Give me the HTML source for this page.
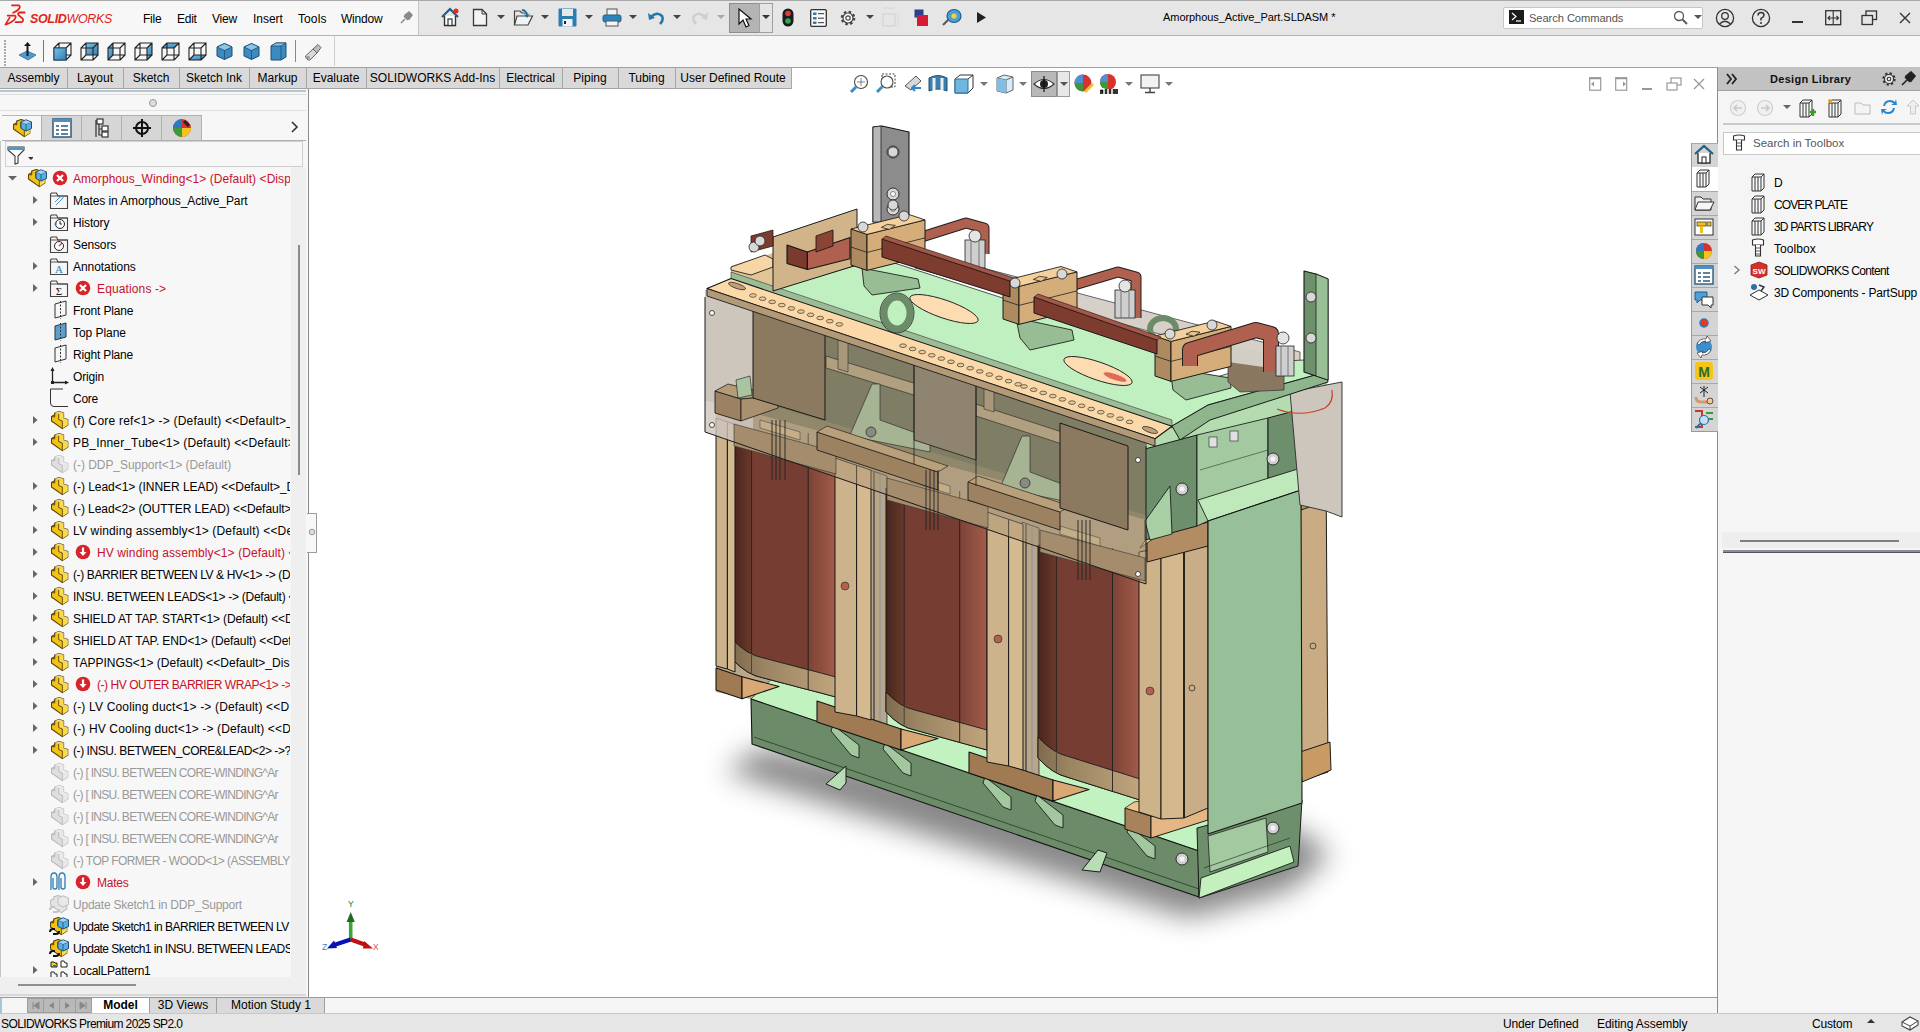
<!DOCTYPE html><html><head><meta charset="utf-8"><style>
html,body{margin:0;padding:0;} body{width:1920px;height:1032px;overflow:hidden;position:relative;background:#f5f5f5;font-family:"Liberation Sans", sans-serif;}
div,svg{box-sizing:border-box;}
</style></head><body>
<div style="position:absolute;left:309px;top:67px;width:1409px;height:930px;background:#ffffff;"></div>
<div style="position:absolute;left:0px;top:0px;width:1920px;height:36px;background:#e6e6e6;border-top:1px solid #a9a9a9;border-bottom:1px solid #b4b4b4;"></div>
<div style="position:absolute;left:0px;top:1px;width:418px;height:34px;background:#f7f7f7;"></div>
<div style="position:absolute;left:418px;top:1px;width:1px;height:34px;background:#c4c4c4;"></div>
<svg style="position:absolute;left:0px;top:0px;" width="30" height="30" viewBox="0 0 30 30"><path d="M12 5.4 H18.8 Q20.6 6 19.2 8.6 Q17 11.4 13 12.8" fill="none" stroke="#e2231a" stroke-width="1.7" stroke-linecap="round"/><path d="M7.6 15.6 H14.6 Q16.6 16.2 15 18.8 Q12 22.6 5.4 24.6 L9.6 17.6" fill="none" stroke="#e2231a" stroke-width="1.7" stroke-linecap="round" stroke-linejoin="round"/><path d="M24.6 12.5 H19.2 Q17.4 13.2 18.6 15.2 L22.6 18.6 Q24 21.2 21.4 22.2 H15.6" fill="none" stroke="#e2231a" stroke-width="1.8" stroke-linecap="round"/></svg>
<div style="position:absolute;left:30px;top:11px;font-size:12.5px;line-height:16px;color:#e2231a;white-space:nowrap;font-style:italic;letter-spacing:-0.35px;"><b>SOLID</b>WORKS</div>
<div style="position:absolute;left:143px;top:11.8px;font-size:12px;line-height:14.4px;color:#000;white-space:nowrap;letter-spacing:-0.227px;">File</div>
<div style="position:absolute;left:177px;top:11.8px;font-size:12px;line-height:14.4px;color:#000;white-space:nowrap;letter-spacing:-0.250px;">Edit</div>
<div style="position:absolute;left:212px;top:11.8px;font-size:12px;line-height:14.4px;color:#000;white-space:nowrap;letter-spacing:-0.187px;">View</div>
<div style="position:absolute;left:253px;top:11.8px;font-size:12px;line-height:14.4px;color:#000;white-space:nowrap;letter-spacing:-0.043px;">Insert</div>
<div style="position:absolute;left:298px;top:11.8px;font-size:12px;line-height:14.4px;color:#000;white-space:nowrap;letter-spacing:0.098px;">Tools</div>
<div style="position:absolute;left:341px;top:11.8px;font-size:12px;line-height:14.4px;color:#000;white-space:nowrap;letter-spacing:-0.222px;">Window</div>
<svg style="position:absolute;left:399px;top:10px;" width="14" height="14" viewBox="0 0 14 14"><path d="M2 13 L6 9 M5 6 L9 10 M6 5 L10 2 L13 5 L10 9 Z" fill="#8a8a8a" stroke="#8a8a8a" stroke-width="1.5"/></svg>
<svg style="position:absolute;left:440px;top:7px;" width="20" height="20" viewBox="0 0 20 20"><path d="M2 10 L10 2 L18 10" fill="none" stroke="#1d5f86" stroke-width="2.2"/><path d="M4.5 9 V18.5 H15.5 V9" fill="#fff" stroke="#333" stroke-width="1.4"/><rect x="8" y="12" width="4" height="6.5" fill="#fff" stroke="#333" stroke-width="1.2"/><circle cx="16" cy="4" r="2.5" fill="#e8291c"/></svg>
<svg style="position:absolute;left:472px;top:8px;" width="16" height="19" viewBox="0 0 16 19"><path d="M1.5 1.5 H10 L14.5 6 V17.5 H1.5 Z" fill="#f4f4f4" stroke="#3a3a3a" stroke-width="1.3"/><path d="M10 1.5 V6 H14.5" fill="none" stroke="#3a3a3a" stroke-width="1"/></svg>
<svg style="position:absolute;left:497px;top:15px;" width="8" height="5" viewBox="0 0 8 5"><path d="M0 0 L8 0 L4 4 Z" fill="#444"/></svg>
<svg style="position:absolute;left:513px;top:7px;" width="21" height="20" viewBox="0 0 21 20"><path d="M1.5 4 H7 L9 6 H14 V17.5 H1.5 Z" fill="#e6e6e6" stroke="#444" stroke-width="1.2"/><path d="M4 9 H19.5 L15 18 H1.5 Z" fill="#f2f2f2" stroke="#444" stroke-width="1.2"/><path d="M9 2 Q14 2 14.5 8 L17 6 L14 11 L11 7 L13 8 Q12.5 4 9 4 Z" fill="#1d6d9c"/></svg>
<svg style="position:absolute;left:541px;top:15px;" width="8" height="5" viewBox="0 0 8 5"><path d="M0 0 L8 0 L4 4 Z" fill="#444"/></svg>
<svg style="position:absolute;left:558px;top:8px;" width="19" height="19" viewBox="0 0 19 19"><rect x="0.5" y="0.5" width="18" height="18" rx="1" fill="#2a7eb0"/><rect x="4" y="1" width="11" height="7" fill="#e8e8e8"/><rect x="4.5" y="11" width="10" height="7.5" fill="#f2f2f2"/><rect x="6" y="13" width="2" height="3" fill="#222"/></svg>
<svg style="position:absolute;left:585px;top:15px;" width="8" height="5" viewBox="0 0 8 5"><path d="M0 0 L8 0 L4 4 Z" fill="#444"/></svg>
<svg style="position:absolute;left:602px;top:8px;" width="20" height="19" viewBox="0 0 20 19"><rect x="5" y="1" width="10" height="7" fill="#f2f2f2" stroke="#555" stroke-width="1"/><rect x="1" y="7" width="18" height="7" rx="2" fill="#2b85bd" stroke="#1e5f87" stroke-width="1"/><rect x="4" y="13" width="12" height="5" fill="#f5f5f5" stroke="#555" stroke-width="1"/></svg>
<svg style="position:absolute;left:629px;top:15px;" width="8" height="5" viewBox="0 0 8 5"><path d="M0 0 L8 0 L4 4 Z" fill="#444"/></svg>
<svg style="position:absolute;left:647px;top:9px;" width="18" height="17" viewBox="0 0 18 17"><path d="M4 8 Q10 2 15 7 Q17 11 13 15" fill="none" stroke="#2379ad" stroke-width="2.6"/><path d="M1 4 L2 11 L8 9 Z" fill="#2379ad"/></svg>
<svg style="position:absolute;left:673px;top:15px;" width="8" height="5" viewBox="0 0 8 5"><path d="M0 0 L8 0 L4 4 Z" fill="#444"/></svg>
<svg style="position:absolute;left:691px;top:9px;" width="18" height="17" viewBox="0 0 18 17"><path d="M14 8 Q8 2 3 7 Q1 11 5 15" fill="none" stroke="#cfcfcf" stroke-width="2.6"/><path d="M17 3 L16 11 L10 9 Z" fill="#cfcfcf"/></svg>
<svg style="position:absolute;left:717px;top:15px;" width="8" height="5" viewBox="0 0 8 5"><path d="M0 0 L8 0 L4 4 Z" fill="#aaa"/></svg>
<div style="position:absolute;left:729px;top:3px;width:31px;height:30px;background:#b4b4b4;border:1px solid #8e8e8e;"></div>
<div style="position:absolute;left:759px;top:3px;width:14px;height:30px;background:#e4e4e4;border:1px solid #a0a0a0;"></div>
<svg style="position:absolute;left:737px;top:8px;" width="16" height="20" viewBox="0 0 16 20"><path d="M2 1 L2 16 L6 12 L9 19 L12 17.5 L9 11 L14 11 Z" fill="#fff" stroke="#111" stroke-width="1.2"/></svg>
<svg style="position:absolute;left:761.5px;top:15px;" width="8" height="5" viewBox="0 0 8 5"><path d="M0 0 L8 0 L4 4 Z" fill="#333"/></svg>
<svg style="position:absolute;left:782px;top:8px;" width="12" height="19" viewBox="0 0 12 19"><rect x="0.5" y="0.5" width="11" height="18" rx="5.5" fill="#1c1c1c"/><circle cx="6" cy="5.5" r="2.8" fill="#e23b3b"/><circle cx="6" cy="13" r="2.8" fill="#2fa84f"/></svg>
<svg style="position:absolute;left:810px;top:9px;" width="17" height="18" viewBox="0 0 17 18"><rect x="0.7" y="0.7" width="15.6" height="16.6" rx="1" fill="#fafafa" stroke="#333" stroke-width="1.3"/><rect x="3" y="3.5" width="3.5" height="2.5" fill="#2b7cb3"/><rect x="3" y="8" width="3.5" height="2.5" fill="#2b7cb3"/><rect x="3" y="12.5" width="3.5" height="2.5" fill="#2b7cb3"/><path d="M8 4.7 H14 M8 9.2 H14 M8 13.7 H14" stroke="#333" stroke-width="1"/></svg>
<svg style="position:absolute;left:839px;top:9px;" width="18" height="18" viewBox="0 0 18 18"><circle cx="9" cy="9" r="6" fill="none" stroke="#444" stroke-width="2.6" stroke-dasharray="2.4 2.3"/><circle cx="9" cy="9" r="5" fill="#fff" stroke="#444" stroke-width="1.2"/><circle cx="9" cy="9" r="2.2" fill="none" stroke="#444" stroke-width="1.2"/></svg>
<svg style="position:absolute;left:865.5px;top:15px;" width="8" height="5" viewBox="0 0 8 5"><path d="M0 0 L8 0 L4 4 Z" fill="#444"/></svg>
<svg style="position:absolute;left:882px;top:4px;" width="20" height="24" viewBox="0 0 20 24"><rect x="1" y="10" width="12" height="12" fill="none" stroke="#cfcfcf" stroke-width="1"/><path d="M1 4 H13 M16 10 V22" stroke="#d6d6d6" stroke-width="1"/></svg>
<svg style="position:absolute;left:914px;top:9px;" width="15" height="18" viewBox="0 0 15 18"><rect x="0.5" y="0.5" width="9" height="8" fill="#2d3e8f"/><rect x="3" y="6" width="11" height="11" fill="#d51a35"/></svg>
<svg style="position:absolute;left:942px;top:8px;" width="20" height="19" viewBox="0 0 20 19"><ellipse cx="12" cy="8" rx="7" ry="6.5" fill="#4a9fd4" stroke="#1f5d85" stroke-width="1.2"/><circle cx="12" cy="8" r="2.6" fill="#f3d23c"/><path d="M6 12 L1 17" stroke="#555" stroke-width="2"/></svg>
<svg style="position:absolute;left:976px;top:11px;" width="11" height="13" viewBox="0 0 11 13"><path d="M1 1 L10 6.5 L1 12 Z" fill="#222"/></svg>
<div style="position:absolute;left:1163px;top:11.4px;font-size:11px;line-height:13.2px;color:#000;white-space:nowrap;letter-spacing:-0.06px;">Amorphous_Active_Part.SLDASM *</div>
<div style="position:absolute;left:1503px;top:7px;width:200px;height:22px;background:#fff;border:1px solid #c6c6c6;border-radius:2px;"></div>
<svg style="position:absolute;left:1509px;top:10px;" width="15" height="14" viewBox="0 0 15 14"><rect width="15" height="14" fill="#1c1c1c"/><path d="M3 3 L7 6.5 L3 10" fill="none" stroke="#fff" stroke-width="1.2"/><path d="M7 11 H12" stroke="#fff" stroke-width="1.2"/></svg>
<div style="position:absolute;left:1529px;top:12.3px;font-size:11.2px;line-height:13.4px;color:#555;white-space:nowrap;letter-spacing:-0.097px;">Search Commands</div>
<svg style="position:absolute;left:1673px;top:10px;" width="15" height="15" viewBox="0 0 15 15"><circle cx="6" cy="6" r="4.5" fill="none" stroke="#555" stroke-width="1.3"/><path d="M9.5 9.5 L14 14" stroke="#555" stroke-width="1.8"/></svg>
<svg style="position:absolute;left:1693.5px;top:15px;" width="8" height="5" viewBox="0 0 8 5"><path d="M0 0 L8 0 L4 4 Z" fill="#555"/></svg>
<svg style="position:absolute;left:1715px;top:8px;" width="20" height="20" viewBox="0 0 20 20"><circle cx="10" cy="10" r="8.6" fill="none" stroke="#333" stroke-width="1.3"/><circle cx="10" cy="8" r="3.3" fill="none" stroke="#333" stroke-width="1.3"/><path d="M4.5 16 Q10 10.5 15.5 16" fill="none" stroke="#333" stroke-width="1.3"/></svg>
<svg style="position:absolute;left:1751px;top:8px;" width="20" height="20" viewBox="0 0 20 20"><circle cx="10" cy="10" r="8.6" fill="none" stroke="#333" stroke-width="1.3"/><path d="M7 7.5 Q7 4.5 10 4.5 Q13 4.5 13 7.2 Q13 9 10 10.5 V12.5" fill="none" stroke="#333" stroke-width="1.5"/><circle cx="10" cy="15" r="1" fill="#333"/></svg>
<div style="position:absolute;left:1792px;top:21px;width:11px;height:2px;background:#333;"></div>
<svg style="position:absolute;left:1825px;top:10px;" width="17" height="16" viewBox="0 0 17 16"><rect x="0.7" y="0.7" width="15" height="14" fill="none" stroke="#333" stroke-width="1.3"/><path d="M8.2 1 V15 M3 8 H13.5 M5 6 L3 8 L5 10 M11.5 6 L13.5 8 L11.5 10" fill="none" stroke="#333" stroke-width="1.1"/></svg>
<svg style="position:absolute;left:1861px;top:10px;" width="17" height="16" viewBox="0 0 17 16"><rect x="5" y="1" width="10.5" height="8.5" fill="none" stroke="#333" stroke-width="1.3"/><rect x="1" y="5.5" width="10.5" height="9" fill="#e6e6e6" stroke="#333" stroke-width="1.3"/></svg>
<svg style="position:absolute;left:1899px;top:12px;" width="12" height="12" viewBox="0 0 12 12"><path d="M1 1 L11 11 M11 1 L1 11" stroke="#333" stroke-width="1.4"/></svg>
<div style="position:absolute;left:0px;top:36px;width:1920px;height:31px;background:#f7f7f7;"></div>
<div style="position:absolute;left:0px;top:67px;width:1920px;height:1px;background:#a0a0a0;"></div>
<div style="position:absolute;left:334px;top:36px;width:1px;height:30px;background:#cfcfcf;"></div>
<div style="position:absolute;left:4px;top:40px;width:2px;height:2px;background:#aaa;"></div>
<div style="position:absolute;left:4px;top:43px;width:2px;height:2px;background:#aaa;"></div>
<div style="position:absolute;left:4px;top:46px;width:2px;height:2px;background:#aaa;"></div>
<div style="position:absolute;left:4px;top:49px;width:2px;height:2px;background:#aaa;"></div>
<div style="position:absolute;left:4px;top:52px;width:2px;height:2px;background:#aaa;"></div>
<div style="position:absolute;left:4px;top:55px;width:2px;height:2px;background:#aaa;"></div>
<div style="position:absolute;left:4px;top:58px;width:2px;height:2px;background:#aaa;"></div>
<div style="position:absolute;left:4px;top:61px;width:2px;height:2px;background:#aaa;"></div>
<div style="position:absolute;left:4px;top:64px;width:2px;height:2px;background:#aaa;"></div>
<svg style="position:absolute;left:18px;top:41px;" width="19" height="20" viewBox="0 0 19 20"><path d="M1 14 L9 10 L18 14 L10 19 Z" fill="#4f9ccc" stroke="#2d6e99" stroke-width="0.8"/><path d="M9.5 15 V3" stroke="#1a1a1a" stroke-width="2"/><path d="M6 5 L9.5 1 L13 5 Z" fill="#1a1a1a"/></svg>
<div style="position:absolute;left:43px;top:40px;width:1px;height:22px;background:#777;"></div>
<div style="position:absolute;left:295px;top:40px;width:1px;height:22px;background:#888;"></div>
<svg style="position:absolute;left:53px;top:42px" width="19" height="19" viewBox="0 0 19 19"><defs><linearGradient id="cubeg" x1="0" y1="0" x2="1" y2="1"><stop offset="0" stop-color="#7cc2e8"/><stop offset="1" stop-color="#2f7db0"/></linearGradient></defs><path d="M1 6 H13 V18 H1 Z M6 1 H18 V13 H6 Z M1 6 L6 1 M13 6 L18 1 M13 18 L18 13 M1 18 L6 13" fill="none" stroke="#222" stroke-width="1.1"/><path d="M1 6 H13 V18 H1 Z" fill="url(#cubeg)" stroke="#1f4f70" stroke-width="1.1"/></svg>
<svg style="position:absolute;left:80px;top:42px" width="19" height="19" viewBox="0 0 19 19"><defs><linearGradient id="cubeg" x1="0" y1="0" x2="1" y2="1"><stop offset="0" stop-color="#7cc2e8"/><stop offset="1" stop-color="#2f7db0"/></linearGradient></defs><path d="M6 1 H18 V13 H6 Z" fill="url(#cubeg)"/><path d="M1 6 H13 V18 H1 Z M6 1 H18 V13 H6 Z M1 6 L6 1 M13 6 L18 1 M13 18 L18 13 M1 18 L6 13" fill="none" stroke="#222" stroke-width="1.1"/></svg>
<svg style="position:absolute;left:107px;top:42px" width="19" height="19" viewBox="0 0 19 19"><defs><linearGradient id="cubeg" x1="0" y1="0" x2="1" y2="1"><stop offset="0" stop-color="#7cc2e8"/><stop offset="1" stop-color="#2f7db0"/></linearGradient></defs><path d="M1 6 L6 1 V13 L1 18 Z" fill="url(#cubeg)"/><path d="M1 6 H13 V18 H1 Z M6 1 H18 V13 H6 Z M1 6 L6 1 M13 6 L18 1 M13 18 L18 13 M1 18 L6 13" fill="none" stroke="#222" stroke-width="1.1"/></svg>
<svg style="position:absolute;left:134px;top:42px" width="19" height="19" viewBox="0 0 19 19"><defs><linearGradient id="cubeg" x1="0" y1="0" x2="1" y2="1"><stop offset="0" stop-color="#7cc2e8"/><stop offset="1" stop-color="#2f7db0"/></linearGradient></defs><path d="M13 6 L18 1 V13 L13 18 Z" fill="url(#cubeg)"/><path d="M1 6 H13 V18 H1 Z M6 1 H18 V13 H6 Z M1 6 L6 1 M13 6 L18 1 M13 18 L18 13 M1 18 L6 13" fill="none" stroke="#222" stroke-width="1.1"/></svg>
<svg style="position:absolute;left:161px;top:42px" width="19" height="19" viewBox="0 0 19 19"><defs><linearGradient id="cubeg" x1="0" y1="0" x2="1" y2="1"><stop offset="0" stop-color="#7cc2e8"/><stop offset="1" stop-color="#2f7db0"/></linearGradient></defs><path d="M1 6 L6 1 H18 L13 6 Z" fill="url(#cubeg)"/><path d="M1 6 H13 V18 H1 Z M6 1 H18 V13 H6 Z M1 6 L6 1 M13 6 L18 1 M13 18 L18 13 M1 18 L6 13" fill="none" stroke="#222" stroke-width="1.1"/></svg>
<svg style="position:absolute;left:188px;top:42px" width="19" height="19" viewBox="0 0 19 19"><defs><linearGradient id="cubeg" x1="0" y1="0" x2="1" y2="1"><stop offset="0" stop-color="#7cc2e8"/><stop offset="1" stop-color="#2f7db0"/></linearGradient></defs><path d="M1 18 L6 13 H18 L13 18 Z" fill="url(#cubeg)"/><path d="M1 6 H13 V18 H1 Z M6 1 H18 V13 H6 Z M1 6 L6 1 M13 6 L18 1 M13 18 L18 13 M1 18 L6 13" fill="none" stroke="#222" stroke-width="1.1"/></svg>
<svg style="position:absolute;left:215px;top:42px" width="19" height="19" viewBox="0 0 19 19"><defs><linearGradient id="cubeg" x1="0" y1="0" x2="1" y2="1"><stop offset="0" stop-color="#7cc2e8"/><stop offset="1" stop-color="#2f7db0"/></linearGradient></defs><path d="M9.5 1.5 L17 5 V14 L9.5 17.5 L2 14 V5 Z" fill="#3b8bc0" stroke="#1f4f70" stroke-width="1"/><path d="M2 5 L9.5 8.5 L17 5 L9.5 1.5 Z" fill="#8cc4e6" stroke="#1f4f70" stroke-width="0.8"/><path d="M9.5 8.5 V17.5" stroke="#1f4f70" stroke-width="0.8"/></svg>
<svg style="position:absolute;left:242px;top:42px" width="19" height="19" viewBox="0 0 19 19"><defs><linearGradient id="cubeg" x1="0" y1="0" x2="1" y2="1"><stop offset="0" stop-color="#7cc2e8"/><stop offset="1" stop-color="#2f7db0"/></linearGradient></defs><path d="M9.5 1.5 L17 5 V14 L9.5 17.5 L2 14 V5 Z" fill="#3b8bc0" stroke="#1f4f70" stroke-width="1"/><path d="M2 5 L9.5 8.5 L17 5 L9.5 1.5 Z" fill="#8cc4e6" stroke="#1f4f70" stroke-width="0.8"/><path d="M9.5 8.5 V17.5" stroke="#1f4f70" stroke-width="0.8"/></svg>
<svg style="position:absolute;left:269px;top:42px" width="19" height="19" viewBox="0 0 19 19"><defs><linearGradient id="cubeg" x1="0" y1="0" x2="1" y2="1"><stop offset="0" stop-color="#7cc2e8"/><stop offset="1" stop-color="#2f7db0"/></linearGradient></defs><path d="M2 4 L7 1 H17 V15 L12 18 H2 Z" fill="#3b8bc0" stroke="#1f4f70" stroke-width="1"/><path d="M2 4 L7 1 H17 L12 4 Z" fill="#8cc4e6" stroke="#1f4f70" stroke-width="0.8"/><path d="M12 4 V18" stroke="#1f4f70" stroke-width="0.8"/></svg>
<svg style="position:absolute;left:304px;top:42px;" width="19" height="19" viewBox="0 0 19 19"><path d="M1.5 14 L9 7 L13 11 L6 18 Q2 18.5 1.5 14 Z" fill="#d8d8d8" stroke="#666" stroke-width="1"/><path d="M9 7 L14 2.5 L17 5.5 L13 11 Z" fill="#bdbdbd" stroke="#666" stroke-width="1"/><ellipse cx="4" cy="15.5" rx="2" ry="1.5" fill="#999"/></svg>
<div style="position:absolute;left:0px;top:68px;width:792px;height:21px;background:#d9d9d9;border-bottom:1px solid #a3a3a3;"></div>
<div style="position:absolute;left:67px;top:68px;width:1px;height:21px;background:#a8a8a8;"></div>
<div style="position:absolute;left:0px;top:69px;width:67px;text-align:center;font-size:12px;line-height:18px;color:#000;white-space:nowrap;">Assembly</div>
<div style="position:absolute;left:123px;top:68px;width:1px;height:21px;background:#a8a8a8;"></div>
<div style="position:absolute;left:67px;top:69px;width:56px;text-align:center;font-size:12px;line-height:18px;color:#000;white-space:nowrap;">Layout</div>
<div style="position:absolute;left:179px;top:68px;width:1px;height:21px;background:#a8a8a8;"></div>
<div style="position:absolute;left:123px;top:69px;width:56px;text-align:center;font-size:12px;line-height:18px;color:#000;white-space:nowrap;">Sketch</div>
<div style="position:absolute;left:249px;top:68px;width:1px;height:21px;background:#a8a8a8;"></div>
<div style="position:absolute;left:179px;top:69px;width:70px;text-align:center;font-size:12px;line-height:18px;color:#000;white-space:nowrap;">Sketch Ink</div>
<div style="position:absolute;left:306px;top:68px;width:1px;height:21px;background:#a8a8a8;"></div>
<div style="position:absolute;left:249px;top:69px;width:57px;text-align:center;font-size:12px;line-height:18px;color:#000;white-space:nowrap;">Markup</div>
<div style="position:absolute;left:366px;top:68px;width:1px;height:21px;background:#a8a8a8;"></div>
<div style="position:absolute;left:306px;top:69px;width:60px;text-align:center;font-size:12px;line-height:18px;color:#000;white-space:nowrap;">Evaluate</div>
<div style="position:absolute;left:499px;top:68px;width:1px;height:21px;background:#a8a8a8;"></div>
<div style="position:absolute;left:366px;top:69px;width:133px;text-align:center;font-size:12px;line-height:18px;color:#000;white-space:nowrap;">SOLIDWORKS Add-Ins</div>
<div style="position:absolute;left:562px;top:68px;width:1px;height:21px;background:#a8a8a8;"></div>
<div style="position:absolute;left:499px;top:69px;width:63px;text-align:center;font-size:12px;line-height:18px;color:#000;white-space:nowrap;">Electrical</div>
<div style="position:absolute;left:618px;top:68px;width:1px;height:21px;background:#a8a8a8;"></div>
<div style="position:absolute;left:562px;top:69px;width:56px;text-align:center;font-size:12px;line-height:18px;color:#000;white-space:nowrap;">Piping</div>
<div style="position:absolute;left:675px;top:68px;width:1px;height:21px;background:#a8a8a8;"></div>
<div style="position:absolute;left:618px;top:69px;width:57px;text-align:center;font-size:12px;line-height:18px;color:#000;white-space:nowrap;">Tubing</div>
<div style="position:absolute;left:791px;top:68px;width:1px;height:21px;background:#a8a8a8;"></div>
<div style="position:absolute;left:675px;top:69px;width:116px;text-align:center;font-size:12px;line-height:18px;color:#000;white-space:nowrap;">User Defined Route</div>
<div style="position:absolute;left:0px;top:997px;width:1718px;height:16px;background:#f5f5f5;border-top:1px solid #9a9a9a;"></div>
<div style="position:absolute;left:0px;top:998px;width:2px;height:15px;background:#a9c4d2;"></div>
<div style="position:absolute;left:27px;top:998px;width:65px;height:15px;background:#9c9c9c;"></div>
<div style="position:absolute;left:28px;top:999px;width:15px;height:13px;background:#b9b9b9;"></div>
<div style="position:absolute;left:44px;top:999px;width:15px;height:13px;background:#b9b9b9;"></div>
<div style="position:absolute;left:60px;top:999px;width:15px;height:13px;background:#b9b9b9;"></div>
<div style="position:absolute;left:76px;top:999px;width:15px;height:13px;background:#b9b9b9;"></div>
<svg style="position:absolute;left:27px;top:998px;" width="65" height="15" viewBox="0 0 65 15"><path d="M6 4 V11 M12 4 L7 7.5 L12 11 Z" stroke="#888" fill="#888"/><path d="M27 4 L22 7.5 L27 11 Z" fill="#888"/><path d="M38 4 L43 7.5 L38 11 Z" fill="#888"/><path d="M59 4 V11 M53 4 L58 7.5 L53 11 Z" stroke="#888" fill="#888"/></svg>
<div style="position:absolute;left:92px;top:998px;width:57px;height:15px;background:#fff;"></div>
<div style="position:absolute;left:92px;top:997px;width:57px;text-align:center;font-size:12px;line-height:16px;font-weight:bold;color:#000;">Model</div>
<div style="position:absolute;left:149px;top:998px;width:68px;height:15px;background:#d9d9d9;border-left:1px solid #a0a0a0;border-right:1px solid #a0a0a0;"></div>
<div style="position:absolute;left:149px;top:997px;width:68px;text-align:center;font-size:12px;line-height:16px;color:#000;">3D Views</div>
<div style="position:absolute;left:217px;top:998px;width:108px;height:15px;background:#d9d9d9;border-right:1px solid #a0a0a0;"></div>
<div style="position:absolute;left:217px;top:997px;width:108px;text-align:center;font-size:12px;line-height:16px;color:#000;">Motion Study 1</div>
<div style="position:absolute;left:0px;top:1013px;width:1920px;height:19px;background:#e6e6e6;border-top:1px solid #c8c8c8;"></div>
<div style="position:absolute;left:1px;top:1016.8px;font-size:12px;line-height:14.4px;color:#000;white-space:nowrap;letter-spacing:-0.6px;">SOLIDWORKS Premium 2025 SP2.0</div>
<div style="position:absolute;left:1503px;top:1016.8px;font-size:12px;line-height:14.4px;color:#000;white-space:nowrap;letter-spacing:-0.147px;">Under Defined</div>
<div style="position:absolute;left:1597px;top:1016.8px;font-size:12px;line-height:14.4px;color:#000;white-space:nowrap;letter-spacing:-0.062px;">Editing Assembly</div>
<div style="position:absolute;left:1812px;top:1016.8px;font-size:12px;line-height:14.4px;color:#000;white-space:nowrap;letter-spacing:-0.160px;">Custom</div>
<svg style="position:absolute;left:1867px;top:1018px;" width="8" height="6" viewBox="0 0 8 6"><path d="M0 5 L4 1 L8 5 Z" fill="#333"/></svg>
<svg style="position:absolute;left:1900px;top:1015px;" width="20" height="17" viewBox="0 0 20 17"><path d="M2 7 L10 2 L18 6 L18 10 L10 15 L2 11 Z" fill="#fff" stroke="#444" stroke-width="1.1"/><path d="M2 7 L10 11 L18 6 M10 11 V15" fill="none" stroke="#444" stroke-width="1"/></svg>
<div style="position:absolute;left:0px;top:89px;width:309px;height:908px;background:#f7f7f7;"></div>
<div style="position:absolute;left:308px;top:89px;width:1px;height:908px;background:#8a8a8a;"></div>
<div style="position:absolute;left:0px;top:90px;width:306px;height:2px;background:#b4c6d1;"></div>
<div style="position:absolute;left:0px;top:94px;width:306px;height:1px;background:#dcdcdc;"></div>
<svg style="position:absolute;left:148px;top:98px;" width="10" height="10" viewBox="0 0 10 10"><circle cx="5" cy="5" r="3.5" fill="#ddd" stroke="#999" stroke-width="1"/></svg>
<div style="position:absolute;left:0px;top:110px;width:306px;height:1px;background:#e0e0e0;"></div>
<div style="position:absolute;left:41px;top:115px;width:41px;height:26px;background:#d6d6d6;border:1px solid #b0b0b0;border-bottom:none;"></div>
<div style="position:absolute;left:81px;top:115px;width:41px;height:26px;background:#d6d6d6;border:1px solid #b0b0b0;border-bottom:none;"></div>
<div style="position:absolute;left:121px;top:115px;width:41px;height:26px;background:#d6d6d6;border:1px solid #b0b0b0;border-bottom:none;"></div>
<div style="position:absolute;left:161px;top:115px;width:41px;height:26px;background:#d6d6d6;border:1px solid #b0b0b0;border-bottom:none;"></div>
<div style="position:absolute;left:2px;top:140px;width:304px;height:1px;background:#b0b0b0;"></div>
<div style="position:absolute;left:2px;top:115px;width:39px;height:1px;background:#b8b8b8;"></div>
<svg style="position:absolute;left:13px;top:119px;" width="20" height="19" viewBox="0 0 20 19"><path d="M0.5 5.5 L3.7 3.8 L3.7 2 L8.2 0.5 L12.6 2 L12.6 7.2 L16.8 8.6 L16.8 14 L11.3 17.6 L0.5 10 Z" fill="#f2c313" stroke="#5a4208" stroke-width="1.1" stroke-linejoin="round"/><path d="M11.3 10 L16.8 8.4 L16.8 14 L11.3 17.5 Z" fill="#f8dc4c"/><path d="M7.7 2.8 V8.6 L11.3 10 V17.5 M0.5 5.5 L3.7 6 V3.8" fill="none" stroke="#5a4208" stroke-width="0.9"/><path d="M8 3 L13 0.8 L18.5 3 V9.5 L13 12 L8 9.5 Z" fill="#5aaee0" stroke="#1f4f78" stroke-width="1"/><path d="M8 3 L13 5.2 L18.5 3 M13 5.2 V12" fill="none" stroke="#1f4f78" stroke-width="0.8"/><path d="M8.5 3.2 L13 1.3 L18 3.2 L13 5 Z" fill="#9fd4f2"/></svg>
<svg style="position:absolute;left:52px;top:118px;" width="20" height="20" viewBox="0 0 20 20"><rect x="1" y="1" width="18" height="18" fill="#fff" stroke="#2c5b7e" stroke-width="1.5"/><rect x="1" y="1" width="18" height="3" fill="#4f8fc0"/><path d="M4 8 H7 M9 8 H16 M4 12 H7 M9 12 H16 M4 16 H7 M9 16 H16" stroke="#2c5b7e" stroke-width="1.4"/></svg>
<svg style="position:absolute;left:93px;top:118px;" width="18" height="20" viewBox="0 0 18 20"><rect x="4" y="1" width="6" height="5" fill="#fff" stroke="#333" stroke-width="1.2"/><rect x="9" y="8" width="6" height="5" fill="#fff" stroke="#333" stroke-width="1.2"/><rect x="9" y="14" width="6" height="5" fill="#fff" stroke="#333" stroke-width="1.2"/><path d="M3 2 V19 M6 6 V17 H9 M6 11 H9" fill="none" stroke="#333" stroke-width="1.2"/></svg>
<svg style="position:absolute;left:132px;top:118px;" width="20" height="20" viewBox="0 0 20 20"><circle cx="10" cy="10" r="6" fill="none" stroke="#111" stroke-width="2"/><path d="M10 1 V19 M1 10 H19" stroke="#111" stroke-width="2"/></svg>
<svg style="position:absolute;left:172px;top:118px;" width="20" height="20" viewBox="0 0 20 20"><circle cx="10" cy="10" r="9" fill="#d9312b"/><path d="M10 10 L1 10 A9 9 0 0 0 10 19 Z" fill="#3a9a3a"/><path d="M10 10 L10 19 A9 9 0 0 0 19 10 Z" fill="#f3c41c"/><path d="M10 10 L1 10 A9 9 0 0 1 10 1 Z" fill="#2f78c8"/><path d="M12 3 L17 8" stroke="#222" stroke-width="3"/></svg>
<svg style="position:absolute;left:290px;top:121px;" width="10" height="12" viewBox="0 0 10 12"><path d="M2 1 L7 6 L2 11" fill="none" stroke="#333" stroke-width="1.6"/></svg>
<div style="position:absolute;left:5px;top:141px;width:298px;height:26px;background:#f7f7f7;border:1px solid #d0d0d0;"></div>
<svg style="position:absolute;left:7px;top:146px;" width="26" height="19" viewBox="0 0 26 19"><path d="M1 1 H17 V4 L11 10 V17 L8 18 V10 L1 4 Z" fill="#fff" stroke="#3a3a3a" stroke-width="1.1"/><path d="M1 1 H17 V4 H1 Z" fill="#4a9bd0"/><path d="M21 11 L27 11 L24 14 Z" fill="#333"/></svg>
<div style="position:absolute;left:0px;top:141px;width:1px;height:836px;background:#c4c4c4;"></div>
<div style="position:absolute;left:291px;top:167px;width:15px;height:810px;background:#efefef;"></div>
<div style="position:absolute;left:298px;top:245px;width:2px;height:230px;background:#8c8c8c;"></div>
<div style="position:absolute;left:307px;top:513px;width:10px;height:40px;background:#f7f7f7;border:1px solid #9c9c9c;border-left:none;"></div>
<svg style="position:absolute;left:308px;top:528px;" width="8" height="8" viewBox="0 0 8 8"><circle cx="4" cy="4" r="2.8" fill="#ddd" stroke="#999" stroke-width="1"/></svg>
<div style="position:absolute;left:0px;top:977px;width:306px;height:20px;background:#efefef;"></div>
<div style="position:absolute;left:18px;top:984px;width:118px;height:2px;background:#8f8f8f;"></div>
<div style="position:absolute;left:0px;top:994px;width:306px;height:2px;background:#d8d8d8;"></div>
<div style="position:absolute;left:0;top:167px;width:290px;height:810px;overflow:hidden;">
<svg style="position:absolute;left:7px;top:8px;" width="11" height="7" viewBox="0 0 11 7"><path d="M1 1 H10 L5.5 5.5 Z" fill="#666"/></svg>
<svg style="position:absolute;left:28px;top:2px;" width="20" height="19" viewBox="0 0 20 19"><path d="M0.5 5.5 L3.7 3.8 L3.7 2 L8.2 0.5 L12.6 2 L12.6 7.2 L16.8 8.6 L16.8 14 L11.3 17.6 L0.5 10 Z" fill="#f2c313" stroke="#5a4208" stroke-width="1.1" stroke-linejoin="round"/><path d="M11.3 10 L16.8 8.4 L16.8 14 L11.3 17.5 Z" fill="#f8dc4c"/><path d="M7.7 2.8 V8.6 L11.3 10 V17.5 M0.5 5.5 L3.7 6 V3.8" fill="none" stroke="#5a4208" stroke-width="0.9"/><path d="M8 3 L13 0.8 L18.5 3 V9.5 L13 12 L8 9.5 Z" fill="#5aaee0" stroke="#1f4f78" stroke-width="1"/><path d="M8 3 L13 5.2 L18.5 3 M13 5.2 V12" fill="none" stroke="#1f4f78" stroke-width="0.8"/><path d="M8.5 3.2 L13 1.3 L18 3.2 L13 5 Z" fill="#9fd4f2"/></svg>
<svg style="position:absolute;left:52px;top:3px;" width="16" height="16" viewBox="0 0 16 16"><circle cx="8" cy="8" r="7.3" fill="#d8232a"/><path d="M5 5 L11 11 M11 5 L5 11" stroke="#fff" stroke-width="2.2"/></svg>
<div style="position:absolute;left:73px;top:4px;font-size:12px;line-height:16px;color:#c8102a;white-space:nowrap;letter-spacing:0.058px;">Amorphous_Winding&lt;1&gt; (Default) &lt;Disp</div>
<svg style="position:absolute;left:32px;top:28px;" width="7" height="10" viewBox="0 0 7 10"><path d="M1 1 L5.5 5 L1 9 Z" fill="#666"/></svg>
<svg style="position:absolute;left:49px;top:23px;" width="20" height="20" viewBox="0 0 20 20"><path d="M1.5 4 V18.5 H18.5 V6 H9 L7.5 3 H2.5 Z" fill="#f6f6f6" stroke="#444" stroke-width="1.1"/><path d="M1.5 6 H18.5" stroke="#444" stroke-width="0.9"/><path d="M7 15 L13 9 Q15 7 13.5 6.5 Q12 6 10 8 L6 12" fill="none" stroke="#4a8fc0" stroke-width="1"/></svg>
<div style="position:absolute;left:73px;top:26px;font-size:12px;line-height:16px;color:#000;white-space:nowrap;letter-spacing:-0.097px;">Mates in Amorphous_Active_Part</div>
<svg style="position:absolute;left:32px;top:50px;" width="7" height="10" viewBox="0 0 7 10"><path d="M1 1 L5.5 5 L1 9 Z" fill="#666"/></svg>
<svg style="position:absolute;left:49px;top:45px;" width="20" height="20" viewBox="0 0 20 20"><path d="M1.5 4 V18.5 H18.5 V6 H9 L7.5 3 H2.5 Z" fill="#f6f6f6" stroke="#444" stroke-width="1.1"/><path d="M1.5 6 H18.5" stroke="#444" stroke-width="0.9"/><circle cx="11" cy="12" r="4.5" fill="#fff" stroke="#222" stroke-width="1"/><path d="M11 9 V12 H13" stroke="#222" stroke-width="1" fill="none"/><path d="M5 12 L8 10 L7 14 Z" fill="#2f7db5"/></svg>
<div style="position:absolute;left:73px;top:48px;font-size:12px;line-height:16px;color:#000;white-space:nowrap;letter-spacing:-0.143px;">History</div>
<svg style="position:absolute;left:49px;top:67px;" width="20" height="20" viewBox="0 0 20 20"><path d="M1.5 4 V18.5 H18.5 V6 H9 L7.5 3 H2.5 Z" fill="#f6f6f6" stroke="#444" stroke-width="1.1"/><path d="M1.5 6 H18.5" stroke="#444" stroke-width="0.9"/><circle cx="10" cy="12" r="4.5" fill="#fff" stroke="#222" stroke-width="1"/><path d="M10 12 L13 9" stroke="#d83a2a" stroke-width="1.3"/></svg>
<div style="position:absolute;left:73px;top:70px;font-size:12px;line-height:16px;color:#000;white-space:nowrap;letter-spacing:-0.121px;">Sensors</div>
<svg style="position:absolute;left:32px;top:94px;" width="7" height="10" viewBox="0 0 7 10"><path d="M1 1 L5.5 5 L1 9 Z" fill="#666"/></svg>
<svg style="position:absolute;left:49px;top:89px;" width="20" height="20" viewBox="0 0 20 20"><path d="M1.5 4 V18.5 H18.5 V6 H9 L7.5 3 H2.5 Z" fill="#f6f6f6" stroke="#444" stroke-width="1.1"/><path d="M1.5 6 H18.5" stroke="#444" stroke-width="0.9"/><text x="10" y="17" font-size="11" font-family="Liberation Serif" text-anchor="middle" fill="#2f7db5">A</text></svg>
<div style="position:absolute;left:73px;top:92px;font-size:12px;line-height:16px;color:#000;white-space:nowrap;letter-spacing:-0.062px;">Annotations</div>
<svg style="position:absolute;left:32px;top:116px;" width="7" height="10" viewBox="0 0 7 10"><path d="M1 1 L5.5 5 L1 9 Z" fill="#666"/></svg>
<svg style="position:absolute;left:49px;top:111px;" width="20" height="20" viewBox="0 0 20 20"><path d="M1.5 4 V18.5 H18.5 V6 H9 L7.5 3 H2.5 Z" fill="#f6f6f6" stroke="#444" stroke-width="1.1"/><path d="M1.5 6 H18.5" stroke="#444" stroke-width="0.9"/><text x="10" y="17" font-size="11" font-family="Liberation Serif" text-anchor="middle" fill="#222">&#931;</text></svg>
<svg style="position:absolute;left:75px;top:113px;" width="16" height="16" viewBox="0 0 16 16"><circle cx="8" cy="8" r="7.3" fill="#d8232a"/><path d="M5 5 L11 11 M11 5 L5 11" stroke="#fff" stroke-width="2.2"/></svg>
<div style="position:absolute;left:97px;top:114px;font-size:12px;line-height:16px;color:#c8102a;white-space:nowrap;letter-spacing:0.126px;">Equations -&gt;</div>
<svg style="position:absolute;left:52px;top:133px;" width="18" height="20" viewBox="0 0 18 20"><path d="M3 4 L14 1 V15 L3 18 Z" fill="none" stroke="#333" stroke-width="1"/><path d="M8.5 1 V19" stroke="#333" stroke-width="1" stroke-dasharray="2 1.5"/></svg>
<div style="position:absolute;left:73px;top:136px;font-size:12px;line-height:16px;color:#000;white-space:nowrap;letter-spacing:-0.158px;">Front Plane</div>
<svg style="position:absolute;left:52px;top:155px;" width="18" height="20" viewBox="0 0 18 20"><path d="M3 4 L14 1 V15 L3 18 Z" fill="#5b9fd0" stroke="#333" stroke-width="1"/><path d="M8.5 1 V19" stroke="#333" stroke-width="1" stroke-dasharray="2 1.5"/></svg>
<div style="position:absolute;left:73px;top:158px;font-size:12px;line-height:16px;color:#000;white-space:nowrap;letter-spacing:-0.050px;">Top Plane</div>
<svg style="position:absolute;left:52px;top:177px;" width="18" height="20" viewBox="0 0 18 20"><path d="M3 4 L14 1 V15 L3 18 Z" fill="none" stroke="#333" stroke-width="1"/><path d="M8.5 1 V19" stroke="#333" stroke-width="1" stroke-dasharray="2 1.5"/></svg>
<div style="position:absolute;left:73px;top:180px;font-size:12px;line-height:16px;color:#000;white-space:nowrap;letter-spacing:-0.175px;">Right Plane</div>
<svg style="position:absolute;left:50px;top:199px;" width="20" height="20" viewBox="0 0 20 20"><path d="M2.5 3 V16.5 H17" fill="none" stroke="#222" stroke-width="1.3"/><path d="M0.5 5 L2.5 1 L4.5 5 Z M15 14.5 L19 16.5 L15 18.5 Z" fill="#222"/><rect x="1" y="15" width="3" height="3" fill="#222"/></svg>
<div style="position:absolute;left:73px;top:202px;font-size:12px;line-height:16px;color:#000;white-space:nowrap;letter-spacing:-0.185px;">Origin</div>
<svg style="position:absolute;left:50px;top:221px;" width="20" height="20" viewBox="0 0 20 20"><path d="M0.5 1 H13 M0.5 1 V15 Q0.5 18.5 4 18.5 H18" fill="none" stroke="#333" stroke-width="1"/></svg>
<div style="position:absolute;left:73px;top:224px;font-size:12px;line-height:16px;color:#000;white-space:nowrap;letter-spacing:-0.266px;">Core</div>
<svg style="position:absolute;left:32px;top:248px;" width="7" height="10" viewBox="0 0 7 10"><path d="M1 1 L5.5 5 L1 9 Z" fill="#666"/></svg>
<svg style="position:absolute;left:51px;top:244px;" width="18" height="19" viewBox="0 0 18 19"><path d="M0.5 5.5 L3.7 3.8 L3.7 2 L8.2 0.5 L12.6 2 L12.6 7.2 L16.8 8.6 L16.8 14 L11.3 17.6 L0.5 10 Z" fill="#f2c313" stroke="#5a4208" stroke-width="1.1" stroke-linejoin="round"/><path d="M7.7 2.8 L12.6 1.9 L12.6 7.2 L7.7 8.6 Z" fill="#f8dc4c"/><path d="M11.3 10 L16.8 8.4 L16.8 14 L11.3 17.5 Z" fill="#f8dc4c"/><path d="M3.7 1.9 L8.2 0.6 L12.5 1.9 L7.7 2.9 Z" fill="#f2d68a"/><path d="M7.7 8.6 L12.6 7.2 L16.7 8.5 L11.3 10 Z" fill="#f2d68a"/><path d="M7.7 2.8 V8.6 L11.3 10 V17.5 M0.5 5.5 L3.7 6 V3.8" fill="none" stroke="#5a4208" stroke-width="0.9"/></svg>
<div style="position:absolute;left:73px;top:246px;font-size:12px;line-height:16px;color:#000;white-space:nowrap;letter-spacing:0.218px;">(f) Core ref&lt;1&gt; -&gt; (Default) &lt;&lt;Default&gt;_D</div>
<svg style="position:absolute;left:32px;top:270px;" width="7" height="10" viewBox="0 0 7 10"><path d="M1 1 L5.5 5 L1 9 Z" fill="#666"/></svg>
<svg style="position:absolute;left:51px;top:266px;" width="18" height="19" viewBox="0 0 18 19"><path d="M0.5 5.5 L3.7 3.8 L3.7 2 L8.2 0.5 L12.6 2 L12.6 7.2 L16.8 8.6 L16.8 14 L11.3 17.6 L0.5 10 Z" fill="#f2c313" stroke="#5a4208" stroke-width="1.1" stroke-linejoin="round"/><path d="M7.7 2.8 L12.6 1.9 L12.6 7.2 L7.7 8.6 Z" fill="#f8dc4c"/><path d="M11.3 10 L16.8 8.4 L16.8 14 L11.3 17.5 Z" fill="#f8dc4c"/><path d="M3.7 1.9 L8.2 0.6 L12.5 1.9 L7.7 2.9 Z" fill="#f2d68a"/><path d="M7.7 8.6 L12.6 7.2 L16.7 8.5 L11.3 10 Z" fill="#f2d68a"/><path d="M7.7 2.8 V8.6 L11.3 10 V17.5 M0.5 5.5 L3.7 6 V3.8" fill="none" stroke="#5a4208" stroke-width="0.9"/></svg>
<div style="position:absolute;left:73px;top:268px;font-size:12px;line-height:16px;color:#000;white-space:nowrap;letter-spacing:0.156px;">PB_Inner_Tube&lt;1&gt; (Default) &lt;&lt;Default&gt;_</div>
<svg style="position:absolute;left:51px;top:288px;" width="18" height="19" viewBox="0 0 18 19"><path d="M0.5 5.5 L3.7 3.8 L3.7 2 L8.2 0.5 L12.6 2 L12.6 7.2 L16.8 8.6 L16.8 14 L11.3 17.6 L0.5 10 Z" fill="#dedede" stroke="#b8b8b8" stroke-width="1.1" stroke-linejoin="round"/><path d="M7.7 2.8 L12.6 1.9 L12.6 7.2 L7.7 8.6 Z" fill="#e8e8e8"/><path d="M11.3 10 L16.8 8.4 L16.8 14 L11.3 17.5 Z" fill="#e8e8e8"/><path d="M3.7 1.9 L8.2 0.6 L12.5 1.9 L7.7 2.9 Z" fill="#eeeeee"/><path d="M7.7 8.6 L12.6 7.2 L16.7 8.5 L11.3 10 Z" fill="#eeeeee"/><path d="M7.7 2.8 V8.6 L11.3 10 V17.5 M0.5 5.5 L3.7 6 V3.8" fill="none" stroke="#b8b8b8" stroke-width="0.9"/></svg>
<div style="position:absolute;left:73px;top:290px;font-size:12px;line-height:16px;color:#999999;white-space:nowrap;letter-spacing:-0.044px;">(-) DDP_Support&lt;1&gt; (Default)</div>
<svg style="position:absolute;left:32px;top:314px;" width="7" height="10" viewBox="0 0 7 10"><path d="M1 1 L5.5 5 L1 9 Z" fill="#666"/></svg>
<svg style="position:absolute;left:51px;top:310px;" width="18" height="19" viewBox="0 0 18 19"><path d="M0.5 5.5 L3.7 3.8 L3.7 2 L8.2 0.5 L12.6 2 L12.6 7.2 L16.8 8.6 L16.8 14 L11.3 17.6 L0.5 10 Z" fill="#f2c313" stroke="#5a4208" stroke-width="1.1" stroke-linejoin="round"/><path d="M7.7 2.8 L12.6 1.9 L12.6 7.2 L7.7 8.6 Z" fill="#f8dc4c"/><path d="M11.3 10 L16.8 8.4 L16.8 14 L11.3 17.5 Z" fill="#f8dc4c"/><path d="M3.7 1.9 L8.2 0.6 L12.5 1.9 L7.7 2.9 Z" fill="#f2d68a"/><path d="M7.7 8.6 L12.6 7.2 L16.7 8.5 L11.3 10 Z" fill="#f2d68a"/><path d="M7.7 2.8 V8.6 L11.3 10 V17.5 M0.5 5.5 L3.7 6 V3.8" fill="none" stroke="#5a4208" stroke-width="0.9"/></svg>
<div style="position:absolute;left:73px;top:312px;font-size:12px;line-height:16px;color:#000;white-space:nowrap;letter-spacing:-0.042px;">(-) Lead&lt;1&gt; (INNER LEAD) &lt;&lt;Default&gt;_D</div>
<svg style="position:absolute;left:32px;top:336px;" width="7" height="10" viewBox="0 0 7 10"><path d="M1 1 L5.5 5 L1 9 Z" fill="#666"/></svg>
<svg style="position:absolute;left:51px;top:332px;" width="18" height="19" viewBox="0 0 18 19"><path d="M0.5 5.5 L3.7 3.8 L3.7 2 L8.2 0.5 L12.6 2 L12.6 7.2 L16.8 8.6 L16.8 14 L11.3 17.6 L0.5 10 Z" fill="#f2c313" stroke="#5a4208" stroke-width="1.1" stroke-linejoin="round"/><path d="M7.7 2.8 L12.6 1.9 L12.6 7.2 L7.7 8.6 Z" fill="#f8dc4c"/><path d="M11.3 10 L16.8 8.4 L16.8 14 L11.3 17.5 Z" fill="#f8dc4c"/><path d="M3.7 1.9 L8.2 0.6 L12.5 1.9 L7.7 2.9 Z" fill="#f2d68a"/><path d="M7.7 8.6 L12.6 7.2 L16.7 8.5 L11.3 10 Z" fill="#f2d68a"/><path d="M7.7 2.8 V8.6 L11.3 10 V17.5 M0.5 5.5 L3.7 6 V3.8" fill="none" stroke="#5a4208" stroke-width="0.9"/></svg>
<div style="position:absolute;left:73px;top:334px;font-size:12px;line-height:16px;color:#000;white-space:nowrap;letter-spacing:-0.054px;">(-) Lead&lt;2&gt; (OUTTER LEAD) &lt;&lt;Default&gt;_</div>
<svg style="position:absolute;left:32px;top:358px;" width="7" height="10" viewBox="0 0 7 10"><path d="M1 1 L5.5 5 L1 9 Z" fill="#666"/></svg>
<svg style="position:absolute;left:51px;top:354px;" width="18" height="19" viewBox="0 0 18 19"><path d="M0.5 5.5 L3.7 3.8 L3.7 2 L8.2 0.5 L12.6 2 L12.6 7.2 L16.8 8.6 L16.8 14 L11.3 17.6 L0.5 10 Z" fill="#f2c313" stroke="#5a4208" stroke-width="1.1" stroke-linejoin="round"/><path d="M7.7 2.8 L12.6 1.9 L12.6 7.2 L7.7 8.6 Z" fill="#f8dc4c"/><path d="M11.3 10 L16.8 8.4 L16.8 14 L11.3 17.5 Z" fill="#f8dc4c"/><path d="M3.7 1.9 L8.2 0.6 L12.5 1.9 L7.7 2.9 Z" fill="#f2d68a"/><path d="M7.7 8.6 L12.6 7.2 L16.7 8.5 L11.3 10 Z" fill="#f2d68a"/><path d="M7.7 2.8 V8.6 L11.3 10 V17.5 M0.5 5.5 L3.7 6 V3.8" fill="none" stroke="#5a4208" stroke-width="0.9"/></svg>
<div style="position:absolute;left:73px;top:356px;font-size:12px;line-height:16px;color:#000;white-space:nowrap;letter-spacing:0.153px;">LV winding assembly&lt;1&gt; (Default) &lt;&lt;Def</div>
<svg style="position:absolute;left:32px;top:380px;" width="7" height="10" viewBox="0 0 7 10"><path d="M1 1 L5.5 5 L1 9 Z" fill="#666"/></svg>
<svg style="position:absolute;left:51px;top:376px;" width="18" height="19" viewBox="0 0 18 19"><path d="M0.5 5.5 L3.7 3.8 L3.7 2 L8.2 0.5 L12.6 2 L12.6 7.2 L16.8 8.6 L16.8 14 L11.3 17.6 L0.5 10 Z" fill="#f2c313" stroke="#5a4208" stroke-width="1.1" stroke-linejoin="round"/><path d="M7.7 2.8 L12.6 1.9 L12.6 7.2 L7.7 8.6 Z" fill="#f8dc4c"/><path d="M11.3 10 L16.8 8.4 L16.8 14 L11.3 17.5 Z" fill="#f8dc4c"/><path d="M3.7 1.9 L8.2 0.6 L12.5 1.9 L7.7 2.9 Z" fill="#f2d68a"/><path d="M7.7 8.6 L12.6 7.2 L16.7 8.5 L11.3 10 Z" fill="#f2d68a"/><path d="M7.7 2.8 V8.6 L11.3 10 V17.5 M0.5 5.5 L3.7 6 V3.8" fill="none" stroke="#5a4208" stroke-width="0.9"/></svg>
<svg style="position:absolute;left:75px;top:377px;" width="16" height="16" viewBox="0 0 16 16"><circle cx="8" cy="8" r="7.3" fill="#d8232a"/><path d="M8 3.5 V10" stroke="#fff" stroke-width="2.2"/><path d="M4.5 8 L8 12 L11.5 8 Z" fill="#fff"/></svg>
<div style="position:absolute;left:97px;top:378px;font-size:12px;line-height:16px;color:#c8102a;white-space:nowrap;letter-spacing:0.105px;">HV winding assembly&lt;1&gt; (Default) &lt;</div>
<svg style="position:absolute;left:32px;top:402px;" width="7" height="10" viewBox="0 0 7 10"><path d="M1 1 L5.5 5 L1 9 Z" fill="#666"/></svg>
<svg style="position:absolute;left:51px;top:398px;" width="18" height="19" viewBox="0 0 18 19"><path d="M0.5 5.5 L3.7 3.8 L3.7 2 L8.2 0.5 L12.6 2 L12.6 7.2 L16.8 8.6 L16.8 14 L11.3 17.6 L0.5 10 Z" fill="#f2c313" stroke="#5a4208" stroke-width="1.1" stroke-linejoin="round"/><path d="M7.7 2.8 L12.6 1.9 L12.6 7.2 L7.7 8.6 Z" fill="#f8dc4c"/><path d="M11.3 10 L16.8 8.4 L16.8 14 L11.3 17.5 Z" fill="#f8dc4c"/><path d="M3.7 1.9 L8.2 0.6 L12.5 1.9 L7.7 2.9 Z" fill="#f2d68a"/><path d="M7.7 8.6 L12.6 7.2 L16.7 8.5 L11.3 10 Z" fill="#f2d68a"/><path d="M7.7 2.8 V8.6 L11.3 10 V17.5 M0.5 5.5 L3.7 6 V3.8" fill="none" stroke="#5a4208" stroke-width="0.9"/></svg>
<div style="position:absolute;left:73px;top:400px;font-size:12px;line-height:16px;color:#000;white-space:nowrap;letter-spacing:-0.377px;">(-) BARRIER BETWEEN LV &amp; HV&lt;1&gt; -&gt; (D</div>
<svg style="position:absolute;left:32px;top:424px;" width="7" height="10" viewBox="0 0 7 10"><path d="M1 1 L5.5 5 L1 9 Z" fill="#666"/></svg>
<svg style="position:absolute;left:51px;top:420px;" width="18" height="19" viewBox="0 0 18 19"><path d="M0.5 5.5 L3.7 3.8 L3.7 2 L8.2 0.5 L12.6 2 L12.6 7.2 L16.8 8.6 L16.8 14 L11.3 17.6 L0.5 10 Z" fill="#f2c313" stroke="#5a4208" stroke-width="1.1" stroke-linejoin="round"/><path d="M7.7 2.8 L12.6 1.9 L12.6 7.2 L7.7 8.6 Z" fill="#f8dc4c"/><path d="M11.3 10 L16.8 8.4 L16.8 14 L11.3 17.5 Z" fill="#f8dc4c"/><path d="M3.7 1.9 L8.2 0.6 L12.5 1.9 L7.7 2.9 Z" fill="#f2d68a"/><path d="M7.7 8.6 L12.6 7.2 L16.7 8.5 L11.3 10 Z" fill="#f2d68a"/><path d="M7.7 2.8 V8.6 L11.3 10 V17.5 M0.5 5.5 L3.7 6 V3.8" fill="none" stroke="#5a4208" stroke-width="0.9"/></svg>
<div style="position:absolute;left:73px;top:422px;font-size:12px;line-height:16px;color:#000;white-space:nowrap;letter-spacing:-0.267px;">INSU. BETWEEN LEADS&lt;1&gt; -&gt; (Default) &lt;</div>
<svg style="position:absolute;left:32px;top:446px;" width="7" height="10" viewBox="0 0 7 10"><path d="M1 1 L5.5 5 L1 9 Z" fill="#666"/></svg>
<svg style="position:absolute;left:51px;top:442px;" width="18" height="19" viewBox="0 0 18 19"><path d="M0.5 5.5 L3.7 3.8 L3.7 2 L8.2 0.5 L12.6 2 L12.6 7.2 L16.8 8.6 L16.8 14 L11.3 17.6 L0.5 10 Z" fill="#f2c313" stroke="#5a4208" stroke-width="1.1" stroke-linejoin="round"/><path d="M7.7 2.8 L12.6 1.9 L12.6 7.2 L7.7 8.6 Z" fill="#f8dc4c"/><path d="M11.3 10 L16.8 8.4 L16.8 14 L11.3 17.5 Z" fill="#f8dc4c"/><path d="M3.7 1.9 L8.2 0.6 L12.5 1.9 L7.7 2.9 Z" fill="#f2d68a"/><path d="M7.7 8.6 L12.6 7.2 L16.7 8.5 L11.3 10 Z" fill="#f2d68a"/><path d="M7.7 2.8 V8.6 L11.3 10 V17.5 M0.5 5.5 L3.7 6 V3.8" fill="none" stroke="#5a4208" stroke-width="0.9"/></svg>
<div style="position:absolute;left:73px;top:444px;font-size:12px;line-height:16px;color:#000;white-space:nowrap;letter-spacing:-0.128px;">SHIELD AT TAP. START&lt;1&gt; (Default) &lt;&lt;D</div>
<svg style="position:absolute;left:32px;top:468px;" width="7" height="10" viewBox="0 0 7 10"><path d="M1 1 L5.5 5 L1 9 Z" fill="#666"/></svg>
<svg style="position:absolute;left:51px;top:464px;" width="18" height="19" viewBox="0 0 18 19"><path d="M0.5 5.5 L3.7 3.8 L3.7 2 L8.2 0.5 L12.6 2 L12.6 7.2 L16.8 8.6 L16.8 14 L11.3 17.6 L0.5 10 Z" fill="#f2c313" stroke="#5a4208" stroke-width="1.1" stroke-linejoin="round"/><path d="M7.7 2.8 L12.6 1.9 L12.6 7.2 L7.7 8.6 Z" fill="#f8dc4c"/><path d="M11.3 10 L16.8 8.4 L16.8 14 L11.3 17.5 Z" fill="#f8dc4c"/><path d="M3.7 1.9 L8.2 0.6 L12.5 1.9 L7.7 2.9 Z" fill="#f2d68a"/><path d="M7.7 8.6 L12.6 7.2 L16.7 8.5 L11.3 10 Z" fill="#f2d68a"/><path d="M7.7 2.8 V8.6 L11.3 10 V17.5 M0.5 5.5 L3.7 6 V3.8" fill="none" stroke="#5a4208" stroke-width="0.9"/></svg>
<div style="position:absolute;left:73px;top:466px;font-size:12px;line-height:16px;color:#000;white-space:nowrap;letter-spacing:-0.104px;">SHIELD AT TAP. END&lt;1&gt; (Default) &lt;&lt;Def</div>
<svg style="position:absolute;left:32px;top:490px;" width="7" height="10" viewBox="0 0 7 10"><path d="M1 1 L5.5 5 L1 9 Z" fill="#666"/></svg>
<svg style="position:absolute;left:51px;top:486px;" width="18" height="19" viewBox="0 0 18 19"><path d="M0.5 5.5 L3.7 3.8 L3.7 2 L8.2 0.5 L12.6 2 L12.6 7.2 L16.8 8.6 L16.8 14 L11.3 17.6 L0.5 10 Z" fill="#f2c313" stroke="#5a4208" stroke-width="1.1" stroke-linejoin="round"/><path d="M7.7 2.8 L12.6 1.9 L12.6 7.2 L7.7 8.6 Z" fill="#f8dc4c"/><path d="M11.3 10 L16.8 8.4 L16.8 14 L11.3 17.5 Z" fill="#f8dc4c"/><path d="M3.7 1.9 L8.2 0.6 L12.5 1.9 L7.7 2.9 Z" fill="#f2d68a"/><path d="M7.7 8.6 L12.6 7.2 L16.7 8.5 L11.3 10 Z" fill="#f2d68a"/><path d="M7.7 2.8 V8.6 L11.3 10 V17.5 M0.5 5.5 L3.7 6 V3.8" fill="none" stroke="#5a4208" stroke-width="0.9"/></svg>
<div style="position:absolute;left:73px;top:488px;font-size:12px;line-height:16px;color:#000;white-space:nowrap;letter-spacing:0.005px;">TAPPINGS&lt;1&gt; (Default) &lt;&lt;Default&gt;_Disp</div>
<svg style="position:absolute;left:32px;top:512px;" width="7" height="10" viewBox="0 0 7 10"><path d="M1 1 L5.5 5 L1 9 Z" fill="#666"/></svg>
<svg style="position:absolute;left:51px;top:508px;" width="18" height="19" viewBox="0 0 18 19"><path d="M0.5 5.5 L3.7 3.8 L3.7 2 L8.2 0.5 L12.6 2 L12.6 7.2 L16.8 8.6 L16.8 14 L11.3 17.6 L0.5 10 Z" fill="#f2c313" stroke="#5a4208" stroke-width="1.1" stroke-linejoin="round"/><path d="M7.7 2.8 L12.6 1.9 L12.6 7.2 L7.7 8.6 Z" fill="#f8dc4c"/><path d="M11.3 10 L16.8 8.4 L16.8 14 L11.3 17.5 Z" fill="#f8dc4c"/><path d="M3.7 1.9 L8.2 0.6 L12.5 1.9 L7.7 2.9 Z" fill="#f2d68a"/><path d="M7.7 8.6 L12.6 7.2 L16.7 8.5 L11.3 10 Z" fill="#f2d68a"/><path d="M7.7 2.8 V8.6 L11.3 10 V17.5 M0.5 5.5 L3.7 6 V3.8" fill="none" stroke="#5a4208" stroke-width="0.9"/></svg>
<svg style="position:absolute;left:75px;top:509px;" width="16" height="16" viewBox="0 0 16 16"><circle cx="8" cy="8" r="7.3" fill="#d8232a"/><path d="M8 3.5 V10" stroke="#fff" stroke-width="2.2"/><path d="M4.5 8 L8 12 L11.5 8 Z" fill="#fff"/></svg>
<div style="position:absolute;left:97px;top:510px;font-size:12px;line-height:16px;color:#c8102a;white-space:nowrap;letter-spacing:-0.451px;">(-) HV OUTER BARRIER WRAP&lt;1&gt; -&gt;</div>
<svg style="position:absolute;left:32px;top:534px;" width="7" height="10" viewBox="0 0 7 10"><path d="M1 1 L5.5 5 L1 9 Z" fill="#666"/></svg>
<svg style="position:absolute;left:51px;top:530px;" width="18" height="19" viewBox="0 0 18 19"><path d="M0.5 5.5 L3.7 3.8 L3.7 2 L8.2 0.5 L12.6 2 L12.6 7.2 L16.8 8.6 L16.8 14 L11.3 17.6 L0.5 10 Z" fill="#f2c313" stroke="#5a4208" stroke-width="1.1" stroke-linejoin="round"/><path d="M7.7 2.8 L12.6 1.9 L12.6 7.2 L7.7 8.6 Z" fill="#f8dc4c"/><path d="M11.3 10 L16.8 8.4 L16.8 14 L11.3 17.5 Z" fill="#f8dc4c"/><path d="M3.7 1.9 L8.2 0.6 L12.5 1.9 L7.7 2.9 Z" fill="#f2d68a"/><path d="M7.7 8.6 L12.6 7.2 L16.7 8.5 L11.3 10 Z" fill="#f2d68a"/><path d="M7.7 2.8 V8.6 L11.3 10 V17.5 M0.5 5.5 L3.7 6 V3.8" fill="none" stroke="#5a4208" stroke-width="0.9"/></svg>
<div style="position:absolute;left:73px;top:532px;font-size:12px;line-height:16px;color:#000;white-space:nowrap;letter-spacing:0.172px;">(-) LV Cooling duct&lt;1&gt; -&gt; (Default) &lt;&lt;D</div>
<svg style="position:absolute;left:32px;top:556px;" width="7" height="10" viewBox="0 0 7 10"><path d="M1 1 L5.5 5 L1 9 Z" fill="#666"/></svg>
<svg style="position:absolute;left:51px;top:552px;" width="18" height="19" viewBox="0 0 18 19"><path d="M0.5 5.5 L3.7 3.8 L3.7 2 L8.2 0.5 L12.6 2 L12.6 7.2 L16.8 8.6 L16.8 14 L11.3 17.6 L0.5 10 Z" fill="#f2c313" stroke="#5a4208" stroke-width="1.1" stroke-linejoin="round"/><path d="M7.7 2.8 L12.6 1.9 L12.6 7.2 L7.7 8.6 Z" fill="#f8dc4c"/><path d="M11.3 10 L16.8 8.4 L16.8 14 L11.3 17.5 Z" fill="#f8dc4c"/><path d="M3.7 1.9 L8.2 0.6 L12.5 1.9 L7.7 2.9 Z" fill="#f2d68a"/><path d="M7.7 8.6 L12.6 7.2 L16.7 8.5 L11.3 10 Z" fill="#f2d68a"/><path d="M7.7 2.8 V8.6 L11.3 10 V17.5 M0.5 5.5 L3.7 6 V3.8" fill="none" stroke="#5a4208" stroke-width="0.9"/></svg>
<div style="position:absolute;left:73px;top:554px;font-size:12px;line-height:16px;color:#000;white-space:nowrap;letter-spacing:0.142px;">(-) HV Cooling duct&lt;1&gt; -&gt; (Default) &lt;&lt;D</div>
<svg style="position:absolute;left:32px;top:578px;" width="7" height="10" viewBox="0 0 7 10"><path d="M1 1 L5.5 5 L1 9 Z" fill="#666"/></svg>
<svg style="position:absolute;left:51px;top:574px;" width="18" height="19" viewBox="0 0 18 19"><path d="M0.5 5.5 L3.7 3.8 L3.7 2 L8.2 0.5 L12.6 2 L12.6 7.2 L16.8 8.6 L16.8 14 L11.3 17.6 L0.5 10 Z" fill="#f2c313" stroke="#5a4208" stroke-width="1.1" stroke-linejoin="round"/><path d="M7.7 2.8 L12.6 1.9 L12.6 7.2 L7.7 8.6 Z" fill="#f8dc4c"/><path d="M11.3 10 L16.8 8.4 L16.8 14 L11.3 17.5 Z" fill="#f8dc4c"/><path d="M3.7 1.9 L8.2 0.6 L12.5 1.9 L7.7 2.9 Z" fill="#f2d68a"/><path d="M7.7 8.6 L12.6 7.2 L16.7 8.5 L11.3 10 Z" fill="#f2d68a"/><path d="M7.7 2.8 V8.6 L11.3 10 V17.5 M0.5 5.5 L3.7 6 V3.8" fill="none" stroke="#5a4208" stroke-width="0.9"/></svg>
<div style="position:absolute;left:73px;top:576px;font-size:12px;line-height:16px;color:#000;white-space:nowrap;letter-spacing:-0.431px;">(-) INSU. BETWEEN_CORE&amp;LEAD&lt;2&gt; -&gt;?</div>
<svg style="position:absolute;left:51px;top:596px;" width="18" height="19" viewBox="0 0 18 19"><path d="M0.5 5.5 L3.7 3.8 L3.7 2 L8.2 0.5 L12.6 2 L12.6 7.2 L16.8 8.6 L16.8 14 L11.3 17.6 L0.5 10 Z" fill="#dedede" stroke="#b8b8b8" stroke-width="1.1" stroke-linejoin="round"/><path d="M7.7 2.8 L12.6 1.9 L12.6 7.2 L7.7 8.6 Z" fill="#e8e8e8"/><path d="M11.3 10 L16.8 8.4 L16.8 14 L11.3 17.5 Z" fill="#e8e8e8"/><path d="M3.7 1.9 L8.2 0.6 L12.5 1.9 L7.7 2.9 Z" fill="#eeeeee"/><path d="M7.7 8.6 L12.6 7.2 L16.7 8.5 L11.3 10 Z" fill="#eeeeee"/><path d="M7.7 2.8 V8.6 L11.3 10 V17.5 M0.5 5.5 L3.7 6 V3.8" fill="none" stroke="#b8b8b8" stroke-width="0.9"/></svg>
<div style="position:absolute;left:73px;top:598px;font-size:12px;line-height:16px;color:#999999;white-space:nowrap;letter-spacing:-0.708px;">(-) [ INSU. BETWEEN CORE-WINDING^Ar</div>
<svg style="position:absolute;left:51px;top:618px;" width="18" height="19" viewBox="0 0 18 19"><path d="M0.5 5.5 L3.7 3.8 L3.7 2 L8.2 0.5 L12.6 2 L12.6 7.2 L16.8 8.6 L16.8 14 L11.3 17.6 L0.5 10 Z" fill="#dedede" stroke="#b8b8b8" stroke-width="1.1" stroke-linejoin="round"/><path d="M7.7 2.8 L12.6 1.9 L12.6 7.2 L7.7 8.6 Z" fill="#e8e8e8"/><path d="M11.3 10 L16.8 8.4 L16.8 14 L11.3 17.5 Z" fill="#e8e8e8"/><path d="M3.7 1.9 L8.2 0.6 L12.5 1.9 L7.7 2.9 Z" fill="#eeeeee"/><path d="M7.7 8.6 L12.6 7.2 L16.7 8.5 L11.3 10 Z" fill="#eeeeee"/><path d="M7.7 2.8 V8.6 L11.3 10 V17.5 M0.5 5.5 L3.7 6 V3.8" fill="none" stroke="#b8b8b8" stroke-width="0.9"/></svg>
<div style="position:absolute;left:73px;top:620px;font-size:12px;line-height:16px;color:#999999;white-space:nowrap;letter-spacing:-0.708px;">(-) [ INSU. BETWEEN CORE-WINDING^Ar</div>
<svg style="position:absolute;left:51px;top:640px;" width="18" height="19" viewBox="0 0 18 19"><path d="M0.5 5.5 L3.7 3.8 L3.7 2 L8.2 0.5 L12.6 2 L12.6 7.2 L16.8 8.6 L16.8 14 L11.3 17.6 L0.5 10 Z" fill="#dedede" stroke="#b8b8b8" stroke-width="1.1" stroke-linejoin="round"/><path d="M7.7 2.8 L12.6 1.9 L12.6 7.2 L7.7 8.6 Z" fill="#e8e8e8"/><path d="M11.3 10 L16.8 8.4 L16.8 14 L11.3 17.5 Z" fill="#e8e8e8"/><path d="M3.7 1.9 L8.2 0.6 L12.5 1.9 L7.7 2.9 Z" fill="#eeeeee"/><path d="M7.7 8.6 L12.6 7.2 L16.7 8.5 L11.3 10 Z" fill="#eeeeee"/><path d="M7.7 2.8 V8.6 L11.3 10 V17.5 M0.5 5.5 L3.7 6 V3.8" fill="none" stroke="#b8b8b8" stroke-width="0.9"/></svg>
<div style="position:absolute;left:73px;top:642px;font-size:12px;line-height:16px;color:#999999;white-space:nowrap;letter-spacing:-0.708px;">(-) [ INSU. BETWEEN CORE-WINDING^Ar</div>
<svg style="position:absolute;left:51px;top:662px;" width="18" height="19" viewBox="0 0 18 19"><path d="M0.5 5.5 L3.7 3.8 L3.7 2 L8.2 0.5 L12.6 2 L12.6 7.2 L16.8 8.6 L16.8 14 L11.3 17.6 L0.5 10 Z" fill="#dedede" stroke="#b8b8b8" stroke-width="1.1" stroke-linejoin="round"/><path d="M7.7 2.8 L12.6 1.9 L12.6 7.2 L7.7 8.6 Z" fill="#e8e8e8"/><path d="M11.3 10 L16.8 8.4 L16.8 14 L11.3 17.5 Z" fill="#e8e8e8"/><path d="M3.7 1.9 L8.2 0.6 L12.5 1.9 L7.7 2.9 Z" fill="#eeeeee"/><path d="M7.7 8.6 L12.6 7.2 L16.7 8.5 L11.3 10 Z" fill="#eeeeee"/><path d="M7.7 2.8 V8.6 L11.3 10 V17.5 M0.5 5.5 L3.7 6 V3.8" fill="none" stroke="#b8b8b8" stroke-width="0.9"/></svg>
<div style="position:absolute;left:73px;top:664px;font-size:12px;line-height:16px;color:#999999;white-space:nowrap;letter-spacing:-0.708px;">(-) [ INSU. BETWEEN CORE-WINDING^Ar</div>
<svg style="position:absolute;left:51px;top:684px;" width="18" height="19" viewBox="0 0 18 19"><path d="M0.5 5.5 L3.7 3.8 L3.7 2 L8.2 0.5 L12.6 2 L12.6 7.2 L16.8 8.6 L16.8 14 L11.3 17.6 L0.5 10 Z" fill="#dedede" stroke="#b8b8b8" stroke-width="1.1" stroke-linejoin="round"/><path d="M7.7 2.8 L12.6 1.9 L12.6 7.2 L7.7 8.6 Z" fill="#e8e8e8"/><path d="M11.3 10 L16.8 8.4 L16.8 14 L11.3 17.5 Z" fill="#e8e8e8"/><path d="M3.7 1.9 L8.2 0.6 L12.5 1.9 L7.7 2.9 Z" fill="#eeeeee"/><path d="M7.7 8.6 L12.6 7.2 L16.7 8.5 L11.3 10 Z" fill="#eeeeee"/><path d="M7.7 2.8 V8.6 L11.3 10 V17.5 M0.5 5.5 L3.7 6 V3.8" fill="none" stroke="#b8b8b8" stroke-width="0.9"/></svg>
<div style="position:absolute;left:73px;top:686px;font-size:12px;line-height:16px;color:#999999;white-space:nowrap;letter-spacing:-0.559px;">(-) TOP FORMER - WOOD&lt;1&gt; (ASSEMBLY</div>
<svg style="position:absolute;left:32px;top:710px;" width="7" height="10" viewBox="0 0 7 10"><path d="M1 1 L5.5 5 L1 9 Z" fill="#666"/></svg>
<svg style="position:absolute;left:47px;top:705px;" width="20" height="20" viewBox="0 0 20 20"><path d="M4 18 V5 Q4 1 7 1 Q10 1 10 5 V15 Q10 17 8 17 Q6 17 6 15 V6" fill="none" stroke="#2f7db5" stroke-width="1.3"/><path d="M12 18 V5 Q12 1 15 1 Q18 1 18 5 V15 Q18 17 16 17 Q14 17 14 15 V6" fill="none" stroke="#2f7db5" stroke-width="1.3"/></svg>
<svg style="position:absolute;left:75px;top:707px;" width="16" height="16" viewBox="0 0 16 16"><circle cx="8" cy="8" r="7.3" fill="#d8232a"/><path d="M8 3.5 V10" stroke="#fff" stroke-width="2.2"/><path d="M4.5 8 L8 12 L11.5 8 Z" fill="#fff"/></svg>
<div style="position:absolute;left:97px;top:708px;font-size:12px;line-height:16px;color:#c8102a;white-space:nowrap;letter-spacing:-0.243px;">Mates</div>
<svg style="position:absolute;left:50px;top:728px;" width="20" height="19" viewBox="0 0 20 19"><path d="M0.5 5.5 L3.7 3.8 L3.7 2 L8.2 0.5 L12.6 2 L12.6 7.2 L16.8 8.6 L16.8 14 L11.3 17.6 L0.5 10 Z" fill="#e4e4e4" stroke="#bdbdbd" stroke-width="1.1"/><path d="M8 3 L13 0.8 L18.5 3 V9.5 L13 12 L8 9.5 Z" fill="#e8e8e8" stroke="#bdbdbd" stroke-width="1"/></svg>
<svg style="position:absolute;left:48px;top:738px;" width="12" height="9" viewBox="0 0 12 9"><path d="M2 5 Q2 2 5 2 H7 M5 7 H8 Q11 7 11 4" fill="none" stroke="#c4c4c4" stroke-width="2"/></svg>
<div style="position:absolute;left:73px;top:730px;font-size:12px;line-height:16px;color:#999999;white-space:nowrap;letter-spacing:-0.226px;">Update Sketch1 in DDP_Support</div>
<svg style="position:absolute;left:50px;top:750px;" width="20" height="19" viewBox="0 0 20 19"><path d="M0.5 5.5 L3.7 3.8 L3.7 2 L8.2 0.5 L12.6 2 L12.6 7.2 L16.8 8.6 L16.8 14 L11.3 17.6 L0.5 10 Z" fill="#f2c313" stroke="#5a4208" stroke-width="1.1" stroke-linejoin="round"/><path d="M11.3 10 L16.8 8.4 L16.8 14 L11.3 17.5 Z" fill="#f8dc4c"/><path d="M7.7 2.8 V8.6 L11.3 10 V17.5 M0.5 5.5 L3.7 6 V3.8" fill="none" stroke="#5a4208" stroke-width="0.9"/><path d="M8 3 L13 0.8 L18.5 3 V9.5 L13 12 L8 9.5 Z" fill="#5aaee0" stroke="#1f4f78" stroke-width="1"/><path d="M8 3 L13 5.2 L18.5 3 M13 5.2 V12" fill="none" stroke="#1f4f78" stroke-width="0.8"/><path d="M8.5 3.2 L13 1.3 L18 3.2 L13 5 Z" fill="#9fd4f2"/></svg>
<svg style="position:absolute;left:48px;top:760px;" width="12" height="9" viewBox="0 0 12 9"><path d="M2 5 Q2 2 5 2 H7 M5 7 H8 Q11 7 11 4" fill="none" stroke="#111" stroke-width="2"/></svg>
<div style="position:absolute;left:73px;top:752px;font-size:12px;line-height:16px;color:#000;white-space:nowrap;letter-spacing:-0.521px;">Update Sketch1 in BARRIER BETWEEN LV</div>
<svg style="position:absolute;left:50px;top:772px;" width="20" height="19" viewBox="0 0 20 19"><path d="M0.5 5.5 L3.7 3.8 L3.7 2 L8.2 0.5 L12.6 2 L12.6 7.2 L16.8 8.6 L16.8 14 L11.3 17.6 L0.5 10 Z" fill="#f2c313" stroke="#5a4208" stroke-width="1.1" stroke-linejoin="round"/><path d="M11.3 10 L16.8 8.4 L16.8 14 L11.3 17.5 Z" fill="#f8dc4c"/><path d="M7.7 2.8 V8.6 L11.3 10 V17.5 M0.5 5.5 L3.7 6 V3.8" fill="none" stroke="#5a4208" stroke-width="0.9"/><path d="M8 3 L13 0.8 L18.5 3 V9.5 L13 12 L8 9.5 Z" fill="#5aaee0" stroke="#1f4f78" stroke-width="1"/><path d="M8 3 L13 5.2 L18.5 3 M13 5.2 V12" fill="none" stroke="#1f4f78" stroke-width="0.8"/><path d="M8.5 3.2 L13 1.3 L18 3.2 L13 5 Z" fill="#9fd4f2"/></svg>
<svg style="position:absolute;left:48px;top:782px;" width="12" height="9" viewBox="0 0 12 9"><path d="M2 5 Q2 2 5 2 H7 M5 7 H8 Q11 7 11 4" fill="none" stroke="#111" stroke-width="2"/></svg>
<div style="position:absolute;left:73px;top:774px;font-size:12px;line-height:16px;color:#000;white-space:nowrap;letter-spacing:-0.530px;">Update Sketch1 in INSU. BETWEEN LEADS</div>
<svg style="position:absolute;left:32px;top:798px;" width="7" height="10" viewBox="0 0 7 10"><path d="M1 1 L5.5 5 L1 9 Z" fill="#666"/></svg>
<svg style="position:absolute;left:50px;top:793px;" width="20" height="20" viewBox="0 0 20 20"><path d="M1 2 H4 L5 3 H7 V7 H1 Z" fill="#f2cd2b" stroke="#222" stroke-width="1"/><rect x="3" y="5" width="3" height="2" fill="#2a6fb0"/><path d="M11 1 H14 L15 3 H17 V7 H11 Z" fill="#fff" stroke="#222" stroke-width="1"/><path d="M1 19 V12 H4 L5 14 H7 V19" fill="none" stroke="#222" stroke-width="1"/><path d="M11 19 V12 H14 L15 14 H17 V19" fill="none" stroke="#222" stroke-width="1"/></svg>
<div style="position:absolute;left:73px;top:796px;font-size:12px;line-height:16px;color:#000;white-space:nowrap;letter-spacing:-0.226px;">LocalLPattern1</div>
</div>
<div style="position:absolute;left:1717px;top:67px;width:203px;height:946px;background:#f5f5f5;border-left:1px solid #8c8c8c;"></div>
<div style="position:absolute;left:1718px;top:67px;width:202px;height:24px;background:#c2c2c2;border-bottom:1px solid #a0a0a0;"></div>
<svg style="position:absolute;left:1726px;top:73px;" width="13" height="12" viewBox="0 0 13 12"><path d="M1 1 L5 6 L1 11 M6 1 L10 6 L6 11" fill="none" stroke="#222" stroke-width="1.8"/></svg>
<div style="position:absolute;left:1770px;top:71px;font-size:11px;line-height:16px;font-weight:bold;color:#111;white-space:nowrap;letter-spacing:0.3px;">Design Library</div>
<svg style="position:absolute;left:1880px;top:70px;" width="18" height="18" viewBox="0 0 18 18"><circle cx="9" cy="9" r="5.5" fill="none" stroke="#333" stroke-width="2.4" stroke-dasharray="2.2 2.1"/><circle cx="9" cy="9" r="4.5" fill="#e8e8e8" stroke="#333" stroke-width="1.1"/><circle cx="9" cy="9" r="1.8" fill="none" stroke="#333" stroke-width="1.1"/></svg>
<svg style="position:absolute;left:1900px;top:71px;" width="16" height="16" viewBox="0 0 16 16"><path d="M2 14 L7 9 M5 6 L10 11 M6 5 L11 1 L15 5 L11 10 Z" fill="#222" stroke="#222" stroke-width="1.6"/></svg>
<svg style="position:absolute;left:1729px;top:99px;" width="18" height="18" viewBox="0 0 18 18"><circle cx="9" cy="9" r="7.5" fill="#f0f0f0" stroke="#cfcfcf" stroke-width="1.2"/><path d="M13 9 H6 M8 6 L5 9 L8 12" fill="none" stroke="#c8c8c8" stroke-width="1.6"/></svg>
<svg style="position:absolute;left:1756px;top:99px;" width="18" height="18" viewBox="0 0 18 18"><circle cx="9" cy="9" r="7.5" fill="#f0f0f0" stroke="#cfcfcf" stroke-width="1.2"/><path d="M5 9 H12 M10 6 L13 9 L10 12" fill="none" stroke="#c8c8c8" stroke-width="1.6"/></svg>
<svg style="position:absolute;left:1783px;top:104px;" width="8" height="6" viewBox="0 0 8 6"><path d="M0 1 H8 L4 5 Z" fill="#666"/></svg>
<svg style="position:absolute;left:1798px;top:98px;" width="18" height="20" viewBox="0 0 18 20"><path d="M2 5 L5 2 H14 V16 L11 19 H2 Z" fill="#fafafa" stroke="#333" stroke-width="1"/><path d="M5 5 V19 M8 5 V19 M11 5 V19 M2 5 H11 L14 2" fill="none" stroke="#333" stroke-width="1"/><path d="M12 14 H18 M15 11 V18" stroke="#3a9a2a" stroke-width="2.4"/></svg>
<svg style="position:absolute;left:1827px;top:98px;" width="18" height="20" viewBox="0 0 18 20"><path d="M2 5 L5 2 H14 V16 L11 19 H2 Z" fill="#fafafa" stroke="#333" stroke-width="1"/><path d="M5 5 V19 M8 5 V19 M11 5 V19 M2 5 H11 L14 2" fill="none" stroke="#333" stroke-width="1"/><circle cx="3" cy="3" r="2" fill="#f39b1b"/></svg>
<svg style="position:absolute;left:1853px;top:98px;" width="20" height="18" viewBox="0 0 20 18"><path d="M2 5 H8 L10 7 H17 V16 H2 Z" fill="#f4f4f4" stroke="#bbb" stroke-width="1"/></svg>
<svg style="position:absolute;left:1880px;top:98px;" width="18" height="18" viewBox="0 0 18 18"><path d="M3 8 Q4 2 10 2 Q13 2 15 4 L16 1 L17 7 L11 7 L13.5 5.5 Q12 4 10 4 Q6 4 5 8 Z" fill="#2a86c8"/><path d="M15 10 Q14 16 8 16 Q5 16 3 14 L2 17 L1 11 L7 11 L4.5 12.5 Q6 14 8 14 Q12 14 13 10 Z" fill="#2a86c8"/></svg>
<svg style="position:absolute;left:1906px;top:98px;" width="14" height="18" viewBox="0 0 14 18"><path d="M7 2 L13 8 H9.5 V16 H4.5 V8 H1 Z" fill="#eee" stroke="#c8c8c8" stroke-width="1"/></svg>
<div style="position:absolute;left:1723px;top:123px;width:197px;height:2px;background:#c9c9c9;"></div>
<div style="position:absolute;left:1723px;top:132px;width:200px;height:23px;background:#fff;border:1px solid #c8c8c8;"></div>
<svg style="position:absolute;left:1732px;top:134px;" width="14" height="18" viewBox="0 0 14 18"><path d="M1.5 2 Q7 0 12.5 2 V6 H1.5 Z" fill="#fff" stroke="#333" stroke-width="1.1"/><path d="M4.5 6 V16 H9.5 V6" fill="#fff" stroke="#333" stroke-width="1.1"/><path d="M4.5 9 H9.5 M4.5 12 H9.5" stroke="#333" stroke-width="0.8"/></svg>
<div style="position:absolute;left:1753px;top:137.1px;font-size:11.5px;line-height:13.8px;color:#555;white-space:nowrap;letter-spacing:0.003px;">Search in Toolbox</div>
<svg style="position:absolute;left:1750px;top:172px;" width="18" height="20" viewBox="0 0 18 20"><path d="M2 5 L5 2 H14 V16 L11 19 H2 Z" fill="#fafafa" stroke="#333" stroke-width="1"/><path d="M5 5 V19 M8 5 V19 M11 5 V19 M2 5 H11 L14 2" fill="none" stroke="#333" stroke-width="1"/></svg>
<div style="position:absolute;left:1774px;top:175.8px;font-size:12px;line-height:14.4px;color:#000;white-space:nowrap;letter-spacing:-1.192px;">D</div>
<svg style="position:absolute;left:1750px;top:194px;" width="18" height="20" viewBox="0 0 18 20"><path d="M2 5 L5 2 H14 V16 L11 19 H2 Z" fill="#fafafa" stroke="#333" stroke-width="1"/><path d="M5 5 V19 M8 5 V19 M11 5 V19 M2 5 H11 L14 2" fill="none" stroke="#333" stroke-width="1"/></svg>
<div style="position:absolute;left:1774px;top:197.8px;font-size:12px;line-height:14.4px;color:#000;white-space:nowrap;letter-spacing:-0.917px;">COVER PLATE</div>
<svg style="position:absolute;left:1750px;top:216px;" width="18" height="20" viewBox="0 0 18 20"><path d="M2 5 L5 2 H14 V16 L11 19 H2 Z" fill="#fafafa" stroke="#333" stroke-width="1"/><path d="M5 5 V19 M8 5 V19 M11 5 V19 M2 5 H11 L14 2" fill="none" stroke="#333" stroke-width="1"/></svg>
<div style="position:absolute;left:1774px;top:219.8px;font-size:12px;line-height:14.4px;color:#000;white-space:nowrap;letter-spacing:-0.807px;">3D PARTS LIBRARY</div>
<svg style="position:absolute;left:1751px;top:238px;" width="14" height="20" viewBox="0 0 14 20"><path d="M1.5 2 Q7 0 12.5 2 V7 H1.5 Z" fill="#fff" stroke="#333" stroke-width="1.1"/><path d="M4.5 7 V18 H9.5 V7" fill="#fff" stroke="#333" stroke-width="1.1"/><path d="M4.5 10 H9.5 M4.5 13 H9.5 M4.5 16 H9.5" stroke="#333" stroke-width="0.8"/></svg>
<div style="position:absolute;left:1774px;top:241.8px;font-size:12px;line-height:14.4px;color:#000;white-space:nowrap;letter-spacing:0.083px;">Toolbox</div>
<svg style="position:absolute;left:1733px;top:265px;" width="8" height="10" viewBox="0 0 8 10"><path d="M1.5 1 L6 5 L1.5 9" fill="none" stroke="#777" stroke-width="1.3"/></svg>
<svg style="position:absolute;left:1750px;top:261px;" width="18" height="18" viewBox="0 0 18 18"><path d="M1 4 L9 1 L17 4 V14 L9 17 L1 14 Z" fill="#d3322a" stroke="#8a1a14" stroke-width="0.8"/><text x="9" y="13" font-size="8" font-weight="bold" font-family="Liberation Sans" text-anchor="middle" fill="#fff">SW</text></svg>
<div style="position:absolute;left:1774px;top:263.8px;font-size:12px;line-height:14.4px;color:#000;white-space:nowrap;letter-spacing:-0.667px;">SOLIDWORKS Content</div>
<svg style="position:absolute;left:1748px;top:282px;" width="22" height="20" viewBox="0 0 22 20"><path d="M2 13 L11 8 L20 13 L11 18 Z" fill="#fff" stroke="#333" stroke-width="1"/><circle cx="6" cy="5" r="3" fill="#2a6fa8"/><path d="M11 3 L16 5 L13 9" fill="none" stroke="#333" stroke-width="1.4"/></svg>
<div style="position:absolute;left:1774px;top:285.8px;font-size:12px;line-height:14.4px;color:#000;white-space:nowrap;letter-spacing:-0.183px;">3D Components - PartSupp</div>
<div style="position:absolute;left:1722px;top:532px;width:198px;height:16px;background:#eeeeee;"></div>
<div style="position:absolute;left:1740px;top:540px;width:159px;height:2px;background:#7f7f7f;"></div>
<div style="position:absolute;left:1723px;top:550px;width:197px;height:2px;background:#8a8aa0;"></div>
<div style="position:absolute;left:1723px;top:552px;width:197px;height:1px;background:#555;"></div>
<div style="position:absolute;left:1691px;top:143px;width:27px;height:289px;background:#d4d4d4;border:1px solid #9a9a9a;border-right:none;"></div>
<div style="position:absolute;left:1692px;top:143px;width:26px;height:1px;background:#a8a8a8;"></div>
<div style="position:absolute;left:1691px;top:167px;width:27px;height:24px;background:#ffffff;border-left:1px solid #9a9a9a;"></div>
<div style="position:absolute;left:1692px;top:191px;width:26px;height:1px;background:#a8a8a8;"></div>
<div style="position:absolute;left:1692px;top:215px;width:26px;height:1px;background:#a8a8a8;"></div>
<div style="position:absolute;left:1692px;top:239px;width:26px;height:1px;background:#a8a8a8;"></div>
<div style="position:absolute;left:1692px;top:263px;width:26px;height:1px;background:#a8a8a8;"></div>
<div style="position:absolute;left:1692px;top:287px;width:26px;height:1px;background:#a8a8a8;"></div>
<div style="position:absolute;left:1692px;top:311px;width:26px;height:1px;background:#a8a8a8;"></div>
<div style="position:absolute;left:1692px;top:335px;width:26px;height:1px;background:#a8a8a8;"></div>
<div style="position:absolute;left:1692px;top:359px;width:26px;height:1px;background:#a8a8a8;"></div>
<div style="position:absolute;left:1692px;top:383px;width:26px;height:1px;background:#a8a8a8;"></div>
<div style="position:absolute;left:1692px;top:407px;width:26px;height:1px;background:#a8a8a8;"></div>
<svg style="position:absolute;left:1692px;top:143px;" width="25" height="24" viewBox="0 0 25 24"><path d="M3 11 L12 3 L21 11" fill="none" stroke="#1d5f86" stroke-width="2.2"/><path d="M6 10 V20 H18 V10" fill="#fff" stroke="#333" stroke-width="1.4"/><rect x="10" y="14" width="4" height="6" fill="#fff" stroke="#333" stroke-width="1.1"/></svg>
<svg style="position:absolute;left:1692px;top:167px;" width="25" height="24" viewBox="0 0 25 24"><path d="M5 6 L8 3 H17 V17 L14 20 H5 Z" fill="#fafafa" stroke="#333" stroke-width="1"/><path d="M8 6 V20 M11 6 V20 M14 6 V20 M5 6 H14 L17 3" fill="none" stroke="#333" stroke-width="1"/></svg>
<svg style="position:absolute;left:1692px;top:191px;" width="25" height="24" viewBox="0 0 25 24"><path d="M3 6 H9 L11 8 H19 V19 H3 Z" fill="#eee" stroke="#333" stroke-width="1"/><path d="M6 11 H22 L18 19 H3 Z" fill="#f6f6f6" stroke="#333" stroke-width="1"/></svg>
<svg style="position:absolute;left:1692px;top:215px;" width="25" height="24" viewBox="0 0 25 24"><rect x="3" y="4" width="18" height="16" fill="#fff" stroke="#333" stroke-width="1"/><rect x="5" y="7" width="9" height="4" fill="#f2c01c" stroke="#333" stroke-width="0.7"/><rect x="8" y="11" width="3" height="7" fill="#f2c01c"/><rect x="15" y="7" width="4" height="4" fill="#f2c01c" stroke="#333" stroke-width="0.7"/></svg>
<svg style="position:absolute;left:1692px;top:239px;" width="25" height="24" viewBox="0 0 25 24"><circle cx="12" cy="12" r="8" fill="#d9312b"/><path d="M12 12 L4 12 A8 8 0 0 0 12 20 Z" fill="#3a9a3a"/><path d="M12 12 L12 20 A8 8 0 0 0 20 12 Z" fill="#f3c41c"/><path d="M12 12 L4 12 A8 8 0 0 1 12 4 Z" fill="#2f78c8"/></svg>
<svg style="position:absolute;left:1692px;top:263px;" width="25" height="24" viewBox="0 0 25 24"><rect x="3" y="3" width="18" height="18" fill="#fff" stroke="#2c5b7e" stroke-width="1.4"/><rect x="3" y="3" width="18" height="3" fill="#4f8fc0"/><path d="M6 10 H9 M11 10 H18 M6 14 H9 M11 14 H18 M6 18 H9 M11 18 H18" stroke="#2c5b7e" stroke-width="1.3"/></svg>
<svg style="position:absolute;left:1692px;top:287px;" width="25" height="24" viewBox="0 0 25 24"><path d="M3 5 H15 V13 H8 L5 16 V13 H3 Z" fill="#4f9fd8" stroke="#1e5f8a" stroke-width="1"/><path d="M10 10 H21 V18 H19 V21 L16 18 H10 Z" fill="#fff" stroke="#333" stroke-width="1"/></svg>
<svg style="position:absolute;left:1692px;top:311px;" width="25" height="24" viewBox="0 0 25 24"><circle cx="12" cy="12" r="4" fill="#e83a1a" stroke="#2a7ac0" stroke-width="1.5"/></svg>
<svg style="position:absolute;left:1692px;top:335px;" width="25" height="24" viewBox="0 0 25 24"><circle cx="12" cy="12" r="8" fill="#3a8fd0"/><path d="M5 9 Q8 3 14 4 L15 1 L19 6 L13 8 L14 6 Q9 6 7 10 Z M19 15 Q16 21 10 20 L9 23 L5 18 L11 16 L10 18 Q15 18 17 14 Z" fill="#fff" stroke="#333" stroke-width="0.7"/></svg>
<svg style="position:absolute;left:1692px;top:359px;" width="25" height="24" viewBox="0 0 25 24"><rect x="3" y="3" width="18" height="18" rx="3" fill="#f6c51a"/><text x="12" y="18" font-size="14" font-weight="bold" font-family="Liberation Sans" text-anchor="middle" fill="#2f6b2a">M</text></svg>
<svg style="position:absolute;left:1692px;top:383px;" width="25" height="24" viewBox="0 0 25 24"><path d="M4 14 Q4 19 9 19 H17" fill="none" stroke="#d59a6a" stroke-width="3"/><circle cx="18" cy="18" r="3" fill="#f0c8a0" stroke="#333" stroke-width="0.8"/><path d="M8 4 L16 10 M16 4 L8 10 M12 3 V14" stroke="#222" stroke-width="1"/></svg>
<svg style="position:absolute;left:1692px;top:407px;" width="25" height="24" viewBox="0 0 25 24"><path d="M3 4 H10 V20 H3" fill="none" stroke="#c43a2a" stroke-width="2"/><path d="M14 6 H21 M14 12 H21" stroke="#3a9a3a" stroke-width="2"/><circle cx="12" cy="13" r="4.5" fill="#bfe0f0" stroke="#2a6fa8" stroke-width="1.2"/><path d="M9 16 L4 21" stroke="#2a6fa8" stroke-width="2"/></svg>
<svg style="position:absolute;left:849px;top:73px;" width="22" height="22" viewBox="0 0 22 22"><circle cx="12" cy="9" r="6.5" fill="#fff" stroke="#4a4a4a" stroke-width="1.1"/><path d="M12 5 V13 M8 9 H16" stroke="#666" stroke-width="0.8"/><path d="M7 14 L2 19" stroke="#3b8dc4" stroke-width="3"/></svg>
<svg style="position:absolute;left:875px;top:73px;" width="22" height="22" viewBox="0 0 22 22"><rect x="7" y="1" width="13" height="13" fill="none" stroke="#444" stroke-width="1" stroke-dasharray="2 1.5"/><circle cx="12" cy="9" r="6" fill="#fff" stroke="#4a4a4a" stroke-width="1.1"/><path d="M7 14 L2 19" stroke="#3b8dc4" stroke-width="3"/></svg>
<svg style="position:absolute;left:901px;top:73px;" width="22" height="22" viewBox="0 0 22 22"><path d="M4 13 L15 3 L20 8 L10 17 Z" fill="#d8d8d8" stroke="#555" stroke-width="1"/><path d="M11 15 H20 M14 12 L11 15 L14 18" fill="none" stroke="#2f86c6" stroke-width="2"/></svg>
<svg style="position:absolute;left:927px;top:73px;" width="22" height="22" viewBox="0 0 22 22"><path d="M2 5 Q11 0 20 5 V18 Q11 14 2 18 Z" fill="#3a7fb0" stroke="#1e4f76" stroke-width="1"/><path d="M7 5 V17 M15 5 V17" stroke="#eee" stroke-width="3"/></svg>
<svg style="position:absolute;left:953px;top:73px;" width="22" height="22" viewBox="0 0 22 22"><path d="M2 6 L7 2 H20 V15 L15 20 H2 Z" fill="#fff" stroke="#333" stroke-width="1"/><path d="M2 6 H15 V20 H2 Z" fill="#6fb6e0" stroke="#2a6f9e" stroke-width="1"/><path d="M15 6 L20 2" stroke="#333" stroke-width="1"/></svg>
<svg style="position:absolute;left:980px;top:82px;" width="8" height="5" viewBox="0 0 8 5"><path d="M0 0 H8 L4 4 Z" fill="#777"/></svg>
<svg style="position:absolute;left:994px;top:73px;" width="22" height="22" viewBox="0 0 22 22"><path d="M3 5 L10 2 L19 4 V17 L12 20 L3 18 Z" fill="#d6ecf8" stroke="#666" stroke-width="1"/><path d="M3 5 L12 7 V20 M12 7 L19 4" fill="none" stroke="#666" stroke-width="1"/><path d="M3 5 L12 7 V20 L3 18 Z" fill="#7fbfe6"/></svg>
<svg style="position:absolute;left:1019px;top:82px;" width="8" height="5" viewBox="0 0 8 5"><path d="M0 0 H8 L4 4 Z" fill="#777"/></svg>
<div style="position:absolute;left:1031px;top:71px;width:26px;height:26px;background:#b8b8b8;border:1px solid #8c8c8c;"></div>
<div style="position:absolute;left:1057px;top:71px;width:13px;height:26px;background:#e8e8e8;border:1px solid #9c9c9c;"></div>
<svg style="position:absolute;left:1033px;top:75px;" width="22" height="18" viewBox="0 0 22 18"><path d="M1 9 Q11 0 21 9 Q11 18 1 9 Z" fill="#fff" stroke="#333" stroke-width="1.1"/><circle cx="11" cy="9" r="4" fill="#222"/><path d="M11 1 V17" stroke="#111" stroke-width="1.2"/></svg>
<svg style="position:absolute;left:1060px;top:82px;" width="8" height="5" viewBox="0 0 8 5"><path d="M0 0 H8 L4 4 Z" fill="#555"/></svg>
<svg style="position:absolute;left:1073px;top:73px;" width="22" height="22" viewBox="0 0 22 22"><circle cx="10" cy="10" r="8.5" fill="#d9312b"/><path d="M10 10 L1.5 10 A8.5 8.5 0 0 0 10 18.5 Z" fill="#3a9a3a"/><path d="M10 10 L1.5 10 A8.5 8.5 0 0 1 10 1.5 Z" fill="#4f8fd8"/><path d="M12 19 L20 11" stroke="#e8c23a" stroke-width="3"/></svg>
<svg style="position:absolute;left:1098px;top:73px;" width="22" height="22" viewBox="0 0 22 22"><circle cx="10" cy="9" r="8" fill="#d9312b"/><path d="M10 9 L2 9 A8 8 0 0 0 10 17 Z" fill="#3a9a3a"/><path d="M10 9 L2 9 A8 8 0 0 1 10 1 Z" fill="#4f8fd8"/><rect x="2" y="16" width="18" height="5" fill="#333"/><path d="M2 16 H6 V21 M10 16 V21 M14 16 V21" stroke="#fff" stroke-width="1.5"/></svg>
<svg style="position:absolute;left:1125px;top:82px;" width="8" height="5" viewBox="0 0 8 5"><path d="M0 0 H8 L4 4 Z" fill="#777"/></svg>
<svg style="position:absolute;left:1139px;top:73px;" width="22" height="22" viewBox="0 0 22 22"><rect x="2" y="2" width="18" height="13" fill="#f2f2f2" stroke="#444" stroke-width="1.1"/><path d="M11 15 V19 M6 19.5 H16" stroke="#444" stroke-width="1.4"/></svg>
<svg style="position:absolute;left:1165px;top:82px;" width="8" height="5" viewBox="0 0 8 5"><path d="M0 0 H8 L4 4 Z" fill="#777"/></svg>
<svg style="position:absolute;left:1589px;top:77px;" width="13" height="14" viewBox="0 0 13 14"><rect x="0.7" y="0.7" width="11" height="12.5" fill="none" stroke="#999" stroke-width="1.2"/><path d="M0.7 1.5 H11.7" stroke="#999" stroke-width="1.5"/><path d="M5 4.5 L2 7 L5 9.5 Z" fill="#999"/></svg>
<svg style="position:absolute;left:1615px;top:77px;" width="13" height="14" viewBox="0 0 13 14"><rect x="0.7" y="0.7" width="11" height="12.5" fill="none" stroke="#999" stroke-width="1.2"/><path d="M0.7 1.5 H11.7" stroke="#999" stroke-width="1.5"/><path d="M8 4.5 L11 7 L8 9.5 Z" fill="#999"/></svg>
<div style="position:absolute;left:1642px;top:88px;width:10px;height:2px;background:#999;"></div>
<svg style="position:absolute;left:1666px;top:77px;" width="16" height="14" viewBox="0 0 16 14"><rect x="5" y="1" width="10" height="7" fill="none" stroke="#999" stroke-width="1.2"/><rect x="1" y="6" width="10" height="7" fill="#fff" stroke="#999" stroke-width="1.2"/></svg>
<svg style="position:absolute;left:1693px;top:78px;" width="12" height="12" viewBox="0 0 12 12"><path d="M1 1 L11 11 M11 1 L1 11" stroke="#999" stroke-width="1.3"/></svg>
<svg style="position:absolute;left:318px;top:895px;" width="66" height="62" viewBox="0 0 66 62"><text x="30" y="12" font-size="8.5" font-family="Liberation Sans" fill="#1e7a1e">Y</text><path d="M32.7 45 V25" stroke="#3aa53a" stroke-width="3.6"/><path d="M28.6 27 L32.7 17 L36.8 27 Z" fill="#1f6a1f"/><path d="M32.7 44.5 L16 50" stroke="#0a10b8" stroke-width="4"/><path d="M9 53.5 L16 45.5 L19 53 Z" fill="#0a10b8"/><path d="M32.7 44.5 L48 50" stroke="#c01010" stroke-width="4"/><path d="M55 53.5 L46 46 L45 53.5 Z" fill="#c01010"/><text x="4" y="55" font-size="8.5" font-family="Liberation Sans" fill="#2a8ae0">Z</text><text x="55" y="55" font-size="8.5" font-family="Liberation Sans" fill="#e04a3a">X</text></svg>
<svg style="position:absolute;left:0;top:0" width="1920" height="1032" viewBox="0 0 1920 1032"><defs><filter id="blur" x="-20%" y="-50%" width="140%" height="200%"><feGaussianBlur stdDeviation="14"/></filter><linearGradient id="coil" x1="0" x2="1" y1="0" y2="0"><stop offset="0" stop-color="#48251d"/><stop offset="0.17" stop-color="#68382b"/><stop offset="0.2" stop-color="#763e33"/><stop offset="0.73" stop-color="#763e33"/><stop offset="0.74" stop-color="#7e4437"/><stop offset="1" stop-color="#a25b4a"/></linearGradient><linearGradient id="ring" x1="0" x2="1" y1="0" y2="0"><stop offset="0" stop-color="#7e6a4e"/><stop offset="0.3" stop-color="#9a8462"/><stop offset="1" stop-color="#c0a47c"/></linearGradient></defs><polygon points="725.0,772.0 1190.0,918.0 1290.0,890.0 1330.0,855.0 1300.0,830.0 760.0,748.0" fill="#6a6a6a" stroke="none" stroke-width="0.00" stroke-linejoin="round" filter="url(#blur)" opacity="0.8"/><polygon points="1296.0,470.0 1326.0,462.0 1328.0,772.0 1298.0,782.0" fill="#c9ab84" stroke="#141414" stroke-width="0.96" stroke-linejoin="round" /><polygon points="1300.0,752.0 1330.0,742.0 1331.0,770.0 1302.0,782.0" fill="#c89a64" stroke="#141414" stroke-width="0.96" stroke-linejoin="round" /><polygon points="716.0,300.0 1146.0,446.0 1300.0,500.0 1300.0,790.0 1199.0,836.0 751.0,699.0 716.0,692.0" fill="#b9a78b" stroke="none" stroke-width="0.00" stroke-linejoin="round" /><polygon points="751.0,699.0 1199.0,851.0 1300.0,806.0 1296.0,788.0 1227.0,812.0 779.0,672.0" fill="#c2f2bf" stroke="#333" stroke-width="0.72" stroke-linejoin="round" /><polygon points="751.0,699.0 1199.0,851.0 1199.0,897.0 752.0,744.0" fill="#6b8b69" stroke="#141414" stroke-width="1.08" stroke-linejoin="round" /><polyline points="754.0,737.0 1199.0,889.0" fill="none" stroke="#2a3a2a" stroke-width="0.8" /><polygon points="833.0,725.0 859.0,745.0 859.0,758.0 851.0,755.0 831.0,731.0" fill="#a3c89f" stroke="#141414" stroke-width="0.84" stroke-linejoin="round" /><polygon points="885.0,743.0 911.0,763.0 911.0,776.0 903.0,773.0 883.0,749.0" fill="#a3c89f" stroke="#141414" stroke-width="0.84" stroke-linejoin="round" /><polygon points="985.0,777.0 1011.0,797.0 1011.0,810.0 1003.0,807.0 983.0,783.0" fill="#a3c89f" stroke="#141414" stroke-width="0.84" stroke-linejoin="round" /><polygon points="1037.0,795.0 1063.0,815.0 1063.0,828.0 1055.0,825.0 1035.0,801.0" fill="#a3c89f" stroke="#141414" stroke-width="0.84" stroke-linejoin="round" /><polygon points="1129.0,826.0 1155.0,846.0 1155.0,859.0 1147.0,856.0 1127.0,832.0" fill="#a3c89f" stroke="#141414" stroke-width="0.84" stroke-linejoin="round" /><polygon points="1197.0,828.0 1302.0,800.0 1298.0,866.0 1199.0,898.0" fill="#6d8f6b" stroke="#141414" stroke-width="0.96" stroke-linejoin="round" /><polygon points="1208.0,836.0 1266.0,818.0 1268.0,852.0 1210.0,872.0" fill="#a3c9a0" stroke="#141414" stroke-width="0.72" stroke-linejoin="round" /><polygon points="1201.0,878.0 1290.0,846.0 1294.0,862.0 1199.0,898.0" fill="#c4f0c0" stroke="#141414" stroke-width="0.84" stroke-linejoin="round" /><polyline points="1204.0,868.0 1290.0,838.0" fill="none" stroke="#222" stroke-width="0.6" /><polygon points="870.0,470.0 887.0,476.0 887.0,735.0 870.0,730.0" fill="#b8a68a" stroke="#141414" stroke-width="0.72" stroke-linejoin="round" /><polyline points="874.0,472.0 874.0,735.0" fill="none" stroke="#333" stroke-width="1.2" /><polyline points="880.0,474.0 880.0,738.0" fill="none" stroke="#9a9a9a" stroke-width="1.6" /><polygon points="1022.0,522.0 1039.0,528.0 1039.0,785.0 1022.0,780.0" fill="#b8a68a" stroke="#141414" stroke-width="0.72" stroke-linejoin="round" /><polyline points="1026.0,524.0 1026.0,785.0" fill="none" stroke="#333" stroke-width="1.2" /><polyline points="1032.0,526.0 1032.0,788.0" fill="none" stroke="#9a9a9a" stroke-width="1.6" /><polygon points="733.0,430.0 836.0,455.0 836.0,697.0 828.6,695.1 821.3,693.1 813.9,691.2 806.6,689.3 799.2,687.4 791.9,685.4 784.5,683.5 777.1,681.6 769.8,679.6 762.4,677.7 755.1,675.6 747.7,672.0 740.4,666.8 733.0,660.0" fill="url(#coil)" stroke="#141414" stroke-width="0.96" stroke-linejoin="round" /><polygon points="733.0,640.0 740.4,646.8 747.7,652.0 755.1,655.6 762.4,657.7 769.8,659.6 777.1,661.6 784.5,663.5 791.9,665.4 799.2,667.4 806.6,669.3 813.9,671.2 821.3,673.1 828.6,675.1 836.0,677.0 836.0,697.0 828.6,695.1 821.3,693.1 813.9,691.2 806.6,689.3 799.2,687.4 791.9,685.4 784.5,683.5 777.1,681.6 769.8,679.6 762.4,677.7 755.1,675.6 747.7,672.0 740.4,666.8 733.0,660.0" fill="url(#ring)" stroke="#141414" stroke-width="0.84" stroke-linejoin="round" /><polyline points="751.5,433.0 751.5,652.9" fill="none" stroke="#1e1e1e" stroke-width="0.8" /><polyline points="808.2,433.0 808.2,689.7" fill="none" stroke="#1e1e1e" stroke-width="0.9" /><polyline points="751.5,672.9 751.5,654.9" fill="none" stroke="#1e1e1e" stroke-width="0.6" /><polygon points="886.0,488.0 987.0,525.0 987.0,750.0 979.8,748.0 972.6,746.0 965.4,744.0 958.1,742.0 950.9,740.0 943.7,738.0 936.5,736.0 929.3,734.0 922.1,732.0 914.9,730.0 907.6,727.8 900.4,724.2 893.2,718.9 886.0,712.0" fill="url(#coil)" stroke="#141414" stroke-width="0.96" stroke-linejoin="round" /><polygon points="886.0,692.0 893.2,698.9 900.4,704.2 907.6,707.8 914.9,710.0 922.1,712.0 929.3,714.0 936.5,716.0 943.7,718.0 950.9,720.0 958.1,722.0 965.4,724.0 972.6,726.0 979.8,728.0 987.0,730.0 987.0,750.0 979.8,748.0 972.6,746.0 965.4,744.0 958.1,742.0 950.9,740.0 943.7,738.0 936.5,736.0 929.3,734.0 922.1,732.0 914.9,730.0 907.6,727.8 900.4,724.2 893.2,718.9 886.0,712.0" fill="url(#ring)" stroke="#141414" stroke-width="0.84" stroke-linejoin="round" /><polyline points="904.2,491.0 904.2,705.0" fill="none" stroke="#1e1e1e" stroke-width="0.8" /><polyline points="959.7,491.0 959.7,742.4" fill="none" stroke="#1e1e1e" stroke-width="0.9" /><polyline points="904.2,725.0 904.2,707.0" fill="none" stroke="#1e1e1e" stroke-width="0.6" /><polygon points="1038.0,545.0 1140.0,578.0 1140.0,800.0 1132.7,797.7 1125.4,795.4 1118.1,793.1 1110.9,790.9 1103.6,788.6 1096.3,786.3 1089.0,784.0 1081.7,781.7 1074.4,779.4 1067.1,777.1 1059.9,774.7 1052.6,770.7 1045.3,765.2 1038.0,758.0" fill="url(#coil)" stroke="#141414" stroke-width="0.96" stroke-linejoin="round" /><polygon points="1038.0,737.0 1045.3,744.2 1052.6,749.7 1059.9,753.7 1067.1,756.1 1074.4,758.4 1081.7,760.7 1089.0,763.0 1096.3,765.3 1103.6,767.6 1110.9,769.9 1118.1,772.1 1125.4,774.4 1132.7,776.7 1140.0,779.0 1140.0,800.0 1132.7,797.7 1125.4,795.4 1118.1,793.1 1110.9,790.9 1103.6,788.6 1096.3,786.3 1089.0,784.0 1081.7,781.7 1074.4,779.4 1067.1,777.1 1059.9,774.7 1052.6,770.7 1045.3,765.2 1038.0,758.0" fill="url(#ring)" stroke="#141414" stroke-width="0.84" stroke-linejoin="round" /><polyline points="1056.4,548.0 1056.4,750.8" fill="none" stroke="#1e1e1e" stroke-width="0.8" /><polyline points="1112.5,548.0 1112.5,791.4" fill="none" stroke="#1e1e1e" stroke-width="0.9" /><polyline points="1056.4,771.7 1056.4,752.8" fill="none" stroke="#1e1e1e" stroke-width="0.6" /><polygon points="716.0,668.0 742.0,676.7 742.0,698.7 716.0,690.0" fill="#a07a52" stroke="#141414" stroke-width="1.08" stroke-linejoin="round" /><polygon points="742.0,676.7 779.0,686.6 742.0,698.7" fill="#d9a874" stroke="#141414" stroke-width="1.08" stroke-linejoin="round" /><polygon points="817.0,701.0 901.0,729.1 901.0,750.1 817.0,722.0" fill="#a07a52" stroke="#141414" stroke-width="1.08" stroke-linejoin="round" /><polygon points="901.0,729.1 938.0,738.6 901.0,750.1" fill="#d9a874" stroke="#141414" stroke-width="1.08" stroke-linejoin="round" /><polygon points="969.0,752.0 1053.0,780.1 1053.0,801.1 969.0,773.0" fill="#a07a52" stroke="#141414" stroke-width="1.08" stroke-linejoin="round" /><polygon points="1053.0,780.1 1089.0,789.6 1053.0,801.1" fill="#d9a874" stroke="#141414" stroke-width="1.08" stroke-linejoin="round" /><polygon points="1125.0,808.0 1151.0,816.0 1151.0,838.0 1125.0,829.0" fill="#a8825a" stroke="#141414" stroke-width="0.96" stroke-linejoin="round" /><polygon points="1151.0,816.0 1208.0,806.0 1208.0,820.0 1151.0,838.0" fill="#e4b684" stroke="#141414" stroke-width="0.96" stroke-linejoin="round" /><polygon points="1125.0,808.0 1134.0,802.0 1208.0,792.0 1208.0,806.0 1151.0,816.0" fill="#eec48e" stroke="#141414" stroke-width="0.72" stroke-linejoin="round" /><polygon points="716.0,418.0 727.4,421.9 727.4,669.0 716.0,666.0" fill="#ccb38b" stroke="#141414" stroke-width="0.96" stroke-linejoin="round" /><polygon points="727.4,421.9 735.0,424.5 735.0,672.0 727.4,669.0" fill="#d5b98f" stroke="#141414" stroke-width="0.96" stroke-linejoin="round" /><polygon points="835.0,458.0 856.6,465.3 856.6,716.0 835.0,712.0" fill="#ccb38b" stroke="#141414" stroke-width="0.96" stroke-linejoin="round" /><polygon points="856.6,465.3 871.0,470.2 871.0,720.0 856.6,716.0" fill="#d5b98f" stroke="#141414" stroke-width="0.96" stroke-linejoin="round" /><polygon points="987.0,512.0 1008.6,519.3 1008.6,766.0 987.0,762.0" fill="#ccb38b" stroke="#141414" stroke-width="0.96" stroke-linejoin="round" /><polygon points="1008.6,519.3 1023.0,524.2 1023.0,770.0 1008.6,766.0" fill="#d5b98f" stroke="#141414" stroke-width="0.96" stroke-linejoin="round" /><polygon points="1139.0,552.0 1161.0,548.0 1161.0,819.0 1139.0,812.0" fill="#cdb28a" stroke="#141414" stroke-width="0.96" stroke-linejoin="round" /><polygon points="1161.0,548.0 1184.0,543.0 1184.0,818.0 1161.0,819.0" fill="#d4b98f" stroke="#141414" stroke-width="0.96" stroke-linejoin="round" /><polygon points="1184.0,543.0 1208.0,538.0 1208.0,808.0 1184.0,818.0" fill="#c8ad88" stroke="#141414" stroke-width="0.96" stroke-linejoin="round" /><polyline points="1184.0,545.0 1184.0,818.0" fill="none" stroke="#2a2418" stroke-width="2" /><polygon points="1147.0,538.0 1208.0,522.0 1208.0,546.0 1147.0,562.0" fill="#b28c62" stroke="#141414" stroke-width="0.96" stroke-linejoin="round" /><polygon points="1301.0,476.0 1329.0,470.0 1329.0,500.0 1301.0,510.0" fill="#c09868" stroke="#141414" stroke-width="0.96" stroke-linejoin="round" /><polygon points="1140.0,548.0 1147.0,538.0 1208.0,522.0 1301.0,490.0 1301.0,476.0 1200.0,506.0" fill="#eccb98" stroke="#141414" stroke-width="0.72" stroke-linejoin="round" /><polygon points="1150.0,425.0 1208.0,405.0 1326.0,372.0 1326.0,390.0 1298.0,412.0 1268.0,420.0 1197.0,437.0 1157.0,448.0 1145.0,452.0" fill="#b4dcb0" stroke="#333" stroke-width="0.60" stroke-linejoin="round" /><polygon points="1145.0,449.0 1197.0,435.0 1197.0,526.0 1145.0,540.0" fill="#6d8f6b" stroke="#141414" stroke-width="0.96" stroke-linejoin="round" /><polygon points="1145.0,521.0 1170.0,486.0 1172.0,534.0 1150.0,540.0" fill="#a8d0a4" stroke="#141414" stroke-width="0.84" stroke-linejoin="round" /><polygon points="1197.0,435.0 1268.0,418.0 1268.0,500.0 1208.0,521.0 1197.0,526.0" fill="#a3c9a0" stroke="#141414" stroke-width="0.84" stroke-linejoin="round" /><polyline points="1200.0,470.0 1268.0,450.0" fill="none" stroke="#333" stroke-width="0.6" /><polygon points="1268.0,418.0 1298.0,410.0 1298.0,490.0 1268.0,500.0" fill="#6d8f6b" stroke="#141414" stroke-width="0.96" stroke-linejoin="round" /><polygon points="1198.0,500.0 1301.0,468.0 1301.0,490.0 1208.0,521.0" fill="#bfe8bb" stroke="#141414" stroke-width="0.84" stroke-linejoin="round" /><polygon points="1208.0,521.0 1301.0,490.0 1302.0,803.0 1208.0,834.0" fill="#98c098" stroke="#141414" stroke-width="1.08" stroke-linejoin="round" /><rect x="1209" y="437" width="8" height="10" fill="#e0e0e0" stroke="#222" stroke-width="0.6"/><rect x="1230" y="431" width="8" height="10" fill="#e0e0e0" stroke="#222" stroke-width="0.6"/><polygon points="1290.0,392.0 1342.0,382.0 1342.0,517.0 1326.0,511.0 1300.0,505.0" fill="#cdc6bd" stroke="#333" stroke-width="0.96" stroke-linejoin="round" /><path d="M1277 409 Q1300 418 1325 408 Q1334 402 1332 390" fill="none" stroke="#c8402a" stroke-width="1.2"/><polygon points="915.0,250.0 1300.0,352.0 1300.0,372.0 915.0,268.0" fill="#d6d0c8" stroke="#333" stroke-width="0.72" stroke-linejoin="round" /><polygon points="731.0,279.0 773.0,290.0 857.0,265.0 882.0,259.0 1012.0,301.0 1034.0,310.0 1156.0,352.0 1194.0,384.0 1266.0,362.0 1304.0,360.0 1326.0,372.0 1208.0,405.0 1172.0,426.0" fill="#c0f0c0" stroke="#333" stroke-width="0.84" stroke-linejoin="round" /><polygon points="862.0,268.0 918.0,279.0 920.0,288.0 872.0,295.0 864.0,286.0" fill="#98bd95" stroke="#141414" stroke-width="0.84" stroke-linejoin="round" /><polygon points="1016.0,318.0 1072.0,330.0 1074.0,340.0 1030.0,350.0 1020.0,338.0" fill="#98bd95" stroke="#141414" stroke-width="0.84" stroke-linejoin="round" /><polygon points="1170.0,368.0 1230.0,378.0 1231.0,388.0 1186.0,400.0 1173.0,390.0" fill="#98bd95" stroke="#141414" stroke-width="0.84" stroke-linejoin="round" /><polygon points="731.0,266.0 773.0,253.0 773.0,292.0 731.0,280.0" fill="#e2c596" stroke="none" stroke-width="0.00" stroke-linejoin="round" /><polygon points="731.0,272.0 1172.0,420.0 1172.0,428.0 731.0,280.0" fill="#9cbc98" stroke="#333" stroke-width="0.60" stroke-linejoin="round" /><ellipse cx="944" cy="309" rx="36" ry="9" transform="rotate(19 944 309)" fill="#fcdcb0" stroke="#222" stroke-width="0.9"/><ellipse cx="1098" cy="371" rx="36" ry="9" transform="rotate(19 1098 371)" fill="#fcdcb0" stroke="#222" stroke-width="0.9"/><ellipse cx="1115" cy="377" rx="12" ry="3" transform="rotate(19 1115 377)" fill="#e06a5a"/><ellipse cx="897" cy="313" rx="13" ry="16" fill="none" stroke="#6b8b69" stroke-width="7"/><ellipse cx="897" cy="313" rx="17" ry="20" fill="none" stroke="#222" stroke-width="0.8"/><ellipse cx="1163" cy="329" rx="13" ry="11" fill="none" stroke="#6b8b69" stroke-width="6"/><polygon points="1172.0,426.0 1208.0,405.0 1326.0,372.0 1328.0,382.0 1210.0,420.0 1180.0,440.0" fill="#8fb58c" stroke="#141414" stroke-width="0.96" stroke-linejoin="round" /><polygon points="731.0,267.0 765.0,255.0 773.0,259.0 773.0,267.0 751.0,275.0 731.0,270.0" fill="#f6d6a6" stroke="#141414" stroke-width="0.84" stroke-linejoin="round" /><polygon points="773.0,237.0 857.0,209.0 857.0,265.0 773.0,291.0" fill="#d2b48a" stroke="#141414" stroke-width="0.96" stroke-linejoin="round" /><polygon points="873.0,127.0 882.0,126.0 909.0,132.0 909.0,222.0 873.0,222.0" fill="#8c8c8c" stroke="#141414" stroke-width="1.08" stroke-linejoin="round" /><polygon points="873.0,127.0 881.0,126.0 881.0,222.0 873.0,222.0" fill="#b8b8b8" stroke="#141414" stroke-width="0.72" stroke-linejoin="round" /><circle cx="893" cy="152" r="6" fill="#d8d8d8" stroke="#222" stroke-width="0.9"/><circle cx="893" cy="152" r="2.5" fill="#fff" stroke="#444" stroke-width="0.6"/><circle cx="893" cy="194" r="6" fill="#d8d8d8" stroke="#222" stroke-width="0.9"/><circle cx="893" cy="194" r="2.5" fill="#fff" stroke="#444" stroke-width="0.6"/><circle cx="893" cy="209" r="6" fill="#d8d8d8" stroke="#222" stroke-width="0.9"/><circle cx="893" cy="209" r="2.5" fill="#fff" stroke="#444" stroke-width="0.6"/><polygon points="1304.0,271.0 1316.0,274.0 1328.0,279.0 1328.0,380.0 1304.0,372.0" fill="#6d926b" stroke="#141414" stroke-width="1.08" stroke-linejoin="round" /><polygon points="1316.0,274.0 1328.0,279.0 1328.0,380.0 1316.0,376.0" fill="#98bf95" stroke="#141414" stroke-width="0.72" stroke-linejoin="round" /><circle cx="1311" cy="297" r="5" fill="#d8d8d8" stroke="#222" stroke-width="0.8"/><circle cx="1311" cy="338" r="5" fill="#d8d8d8" stroke="#222" stroke-width="0.8"/><polygon points="787.0,245.0 807.4,252.0 807.4,269.4 787.0,263.6" fill="#7a3a2e" stroke="#141414" stroke-width="1.08" stroke-linejoin="round" /><polygon points="807.4,252.0 850.0,237.4 850.0,258.8 807.4,269.4" fill="#b0604e" stroke="#141414" stroke-width="1.08" stroke-linejoin="round" /><polygon points="816.0,236.0 833.0,230.0 833.0,246.0 816.0,252.0" fill="#8a4434" stroke="#141414" stroke-width="0.84" stroke-linejoin="round" /><polyline points="912,254 912,240 966,223 984,228 984,254" fill="none" stroke="#1e1e1e" stroke-width="11" stroke-linejoin="round"/><polyline points="912,254 912,240 966,223 984,228 984,254" fill="none" stroke="#b0604e" stroke-width="9" stroke-linejoin="round"/><polyline points="1064,320 1064,288 1118,272 1136,277 1136,318" fill="none" stroke="#1e1e1e" stroke-width="11" stroke-linejoin="round"/><polyline points="1064,320 1064,288 1118,272 1136,277 1136,318" fill="none" stroke="#b0604e" stroke-width="9" stroke-linejoin="round"/><polygon points="1228.0,348.0 1266.0,356.0 1284.0,372.0 1284.0,390.0 1240.0,392.0 1228.0,382.0" fill="#8a7760" stroke="#333" stroke-width="0.72" stroke-linejoin="round" /><polygon points="1232.0,346.0 1266.0,354.0 1284.0,370.0 1228.0,362.0" fill="#d2cdc5" stroke="none" stroke-width="0.00" stroke-linejoin="round" /><polygon points="751.0,236.0 773.0,230.0 773.0,246.0 751.0,252.0" fill="#7e3c2f" stroke="#141414" stroke-width="0.72" stroke-linejoin="round" /><rect x="965" y="240" width="20" height="28" fill="#cfcfcf" stroke="#222" stroke-width="0.8"/><path d="M971 240 V268 M979 240 V268" stroke="#777" stroke-width="1"/><circle cx="975" cy="236" r="6" fill="#e4e4e4" stroke="#222" stroke-width="0.8"/><rect x="1115" y="290" width="20" height="28" fill="#cfcfcf" stroke="#222" stroke-width="0.8"/><path d="M1121 290 V318 M1129 290 V318" stroke="#777" stroke-width="1"/><circle cx="1125" cy="286" r="6" fill="#e4e4e4" stroke="#222" stroke-width="0.8"/><polygon points="851.0,229.0 867.0,234.4 867.0,270.4 851.0,265.0" fill="#ad8a60" stroke="#141414" stroke-width="0.96" stroke-linejoin="round" /><polygon points="867.0,234.4 925.0,219.9 925.0,255.9 867.0,270.4" fill="#d4ad7a" stroke="#141414" stroke-width="0.96" stroke-linejoin="round" /><polygon points="851.0,229.0 867.0,234.4 925.0,219.9 909.0,214.5" fill="#f4d09c" stroke="#141414" stroke-width="0.84" stroke-linejoin="round" /><polyline points="851.0,247.0 867.0,252.4 925.0,237.9" fill="none" stroke="#222" stroke-width="0.8" /><polygon points="881.3,227.4 887.3,224.4 895.3,225.4 889.3,229.4" fill="#e8c490" stroke="#141414" stroke-width="0.72" stroke-linejoin="round" /><polygon points="1003.0,281.0 1019.0,286.4 1019.0,324.4 1003.0,319.0" fill="#ad8a60" stroke="#141414" stroke-width="0.96" stroke-linejoin="round" /><polygon points="1019.0,286.4 1077.0,271.9 1077.0,309.9 1019.0,324.4" fill="#d4ad7a" stroke="#141414" stroke-width="0.96" stroke-linejoin="round" /><polygon points="1003.0,281.0 1019.0,286.4 1077.0,271.9 1061.0,266.5" fill="#f4d09c" stroke="#141414" stroke-width="0.84" stroke-linejoin="round" /><polyline points="1003.0,300.0 1019.0,305.4 1077.0,290.9" fill="none" stroke="#222" stroke-width="0.8" /><polygon points="1033.3,279.4 1039.3,276.4 1047.3,277.4 1041.3,281.4" fill="#e8c490" stroke="#141414" stroke-width="0.72" stroke-linejoin="round" /><polygon points="1155.0,336.0 1171.0,341.4 1171.0,381.4 1155.0,376.0" fill="#ad8a60" stroke="#141414" stroke-width="0.96" stroke-linejoin="round" /><polygon points="1171.0,341.4 1231.0,326.4 1231.0,366.4 1171.0,381.4" fill="#d4ad7a" stroke="#141414" stroke-width="0.96" stroke-linejoin="round" /><polygon points="1155.0,336.0 1171.0,341.4 1231.0,326.4 1215.0,321.0" fill="#f4d09c" stroke="#141414" stroke-width="0.84" stroke-linejoin="round" /><polyline points="1155.0,356.0 1171.0,361.4 1231.0,346.4" fill="none" stroke="#222" stroke-width="0.8" /><polygon points="1186.0,334.2 1192.0,331.2 1200.0,332.2 1194.0,336.2" fill="#e8c490" stroke="#141414" stroke-width="0.72" stroke-linejoin="round" /><polyline points="1190,366 1190,350 1256,330 1271,334 1271,372" fill="none" stroke="#1e1e1e" stroke-width="16" stroke-linejoin="round"/><polyline points="1190,366 1190,350 1256,330 1271,334 1271,372" fill="none" stroke="#b0604e" stroke-width="14" stroke-linejoin="round"/><rect x="1276" y="346" width="18" height="30" fill="#cfcfcf" stroke="#222" stroke-width="0.8"/><path d="M1281 346 V376 M1288 346 V376" stroke="#777" stroke-width="1"/><circle cx="1283" cy="338" r="6" fill="#e4e4e4" stroke="#222" stroke-width="0.8"/><polygon points="882.0,239.0 1010.0,281.0 1010.0,297.0 882.0,257.0" fill="#7e3c2f" stroke="#141414" stroke-width="0.96" stroke-linejoin="round" /><polygon points="882.0,239.0 886.0,236.0 1014.0,278.0 1010.0,281.0" fill="#a65848" stroke="#141414" stroke-width="0.60" stroke-linejoin="round" /><polygon points="1034.0,297.0 1157.0,340.0 1157.0,354.0 1034.0,313.0" fill="#7e3c2f" stroke="#141414" stroke-width="0.96" stroke-linejoin="round" /><polygon points="1034.0,297.0 1038.0,294.0 1161.0,337.0 1157.0,340.0" fill="#a65848" stroke="#141414" stroke-width="0.60" stroke-linejoin="round" /><circle cx="754" cy="247" r="5" fill="#d8d8d8" stroke="#222" stroke-width="0.8"/><circle cx="760" cy="241" r="5" fill="#d8d8d8" stroke="#222" stroke-width="0.8"/><circle cx="863" cy="227" r="5" fill="#d8d8d8" stroke="#222" stroke-width="0.8"/><circle cx="904" cy="216" r="5" fill="#d8d8d8" stroke="#222" stroke-width="0.8"/><circle cx="1062" cy="274" r="5" fill="#d8d8d8" stroke="#222" stroke-width="0.8"/><circle cx="1015" cy="283" r="5" fill="#d8d8d8" stroke="#222" stroke-width="0.8"/><circle cx="1212" cy="325" r="5" fill="#d8d8d8" stroke="#222" stroke-width="0.8"/><circle cx="1170" cy="334" r="5" fill="#d8d8d8" stroke="#222" stroke-width="0.8"/><circle cx="893" cy="152" r="5" fill="#d8d8d8" stroke="#222" stroke-width="0.8"/><circle cx="893" cy="205" r="5" fill="#d8d8d8" stroke="#222" stroke-width="0.8"/><polygon points="705.0,290.0 1146.0,440.0 1146.0,520.0 705.0,400.0" fill="#cdc6bd" stroke="none" stroke-width="0.00" stroke-linejoin="round" /><polygon points="705.0,400.0 753.0,416.0 753.0,449.0 705.0,432.0" fill="#cdc6bd" stroke="none" stroke-width="0.00" stroke-linejoin="round" opacity="0.8"/><polygon points="705.0,290.0 1146.0,440.0 1146.0,520.0 705.0,400.0" fill="#7f7d64" stroke="none" stroke-width="0.00" stroke-linejoin="round" /><polygon points="705.0,290.0 753.0,306.0 753.0,416.0 705.0,400.0" fill="#cdc6bd" stroke="none" stroke-width="0.00" stroke-linejoin="round" /><polygon points="753.0,400.0 1146.0,515.0 1146.0,584.0 753.0,449.0" fill="#a99474" stroke="none" stroke-width="0.00" stroke-linejoin="round" opacity="0.45"/><polygon points="734.0,424.0 836.0,452.0 836.0,474.0 734.0,446.0" fill="#a48c6c" stroke="#333" stroke-width="0.60" stroke-linejoin="round" /><polygon points="887.0,478.0 988.0,506.0 988.0,528.0 887.0,500.0" fill="#a48c6c" stroke="#333" stroke-width="0.60" stroke-linejoin="round" /><polygon points="1040.0,530.0 1145.0,558.0 1145.0,581.0 1040.0,552.0" fill="#a48c6c" stroke="#333" stroke-width="0.60" stroke-linejoin="round" /><polygon points="760.0,420.0 800.0,432.0 800.0,440.0 760.0,428.0" fill="#c4ae88" stroke="#333" stroke-width="0.48" stroke-linejoin="round" /><polygon points="910.0,474.0 950.0,486.0 950.0,494.0 910.0,482.0" fill="#c4ae88" stroke="#333" stroke-width="0.48" stroke-linejoin="round" /><polygon points="1060.0,526.0 1100.0,538.0 1100.0,546.0 1060.0,534.0" fill="#c4ae88" stroke="#333" stroke-width="0.48" stroke-linejoin="round" /><polygon points="826.0,356.0 930.0,388.0 930.0,400.0 826.0,368.0" fill="#b0a080" stroke="#333" stroke-width="0.72" stroke-linejoin="round" /><polygon points="976.0,404.0 1062.0,432.0 1062.0,444.0 976.0,416.0" fill="#b0a080" stroke="#333" stroke-width="0.72" stroke-linejoin="round" /><polygon points="838.0,336.0 848.0,339.0 848.0,372.0 838.0,369.0" fill="#a8977a" stroke="#333" stroke-width="0.60" stroke-linejoin="round" /><polygon points="984.0,384.0 994.0,387.0 994.0,412.0 984.0,409.0" fill="#a8977a" stroke="#333" stroke-width="0.60" stroke-linejoin="round" /><polygon points="850.0,435.0 872.0,384.0 880.0,384.0 880.0,420.0 930.0,438.0 930.0,452.0 870.0,440.0" fill="#a6b494" stroke="#333" stroke-width="0.72" stroke-linejoin="round" /><polygon points="1000.0,488.0 1022.0,436.0 1030.0,436.0 1030.0,472.0 1078.0,490.0 1078.0,504.0 1020.0,492.0" fill="#a6b494" stroke="#333" stroke-width="0.72" stroke-linejoin="round" /><circle cx="871" cy="432" r="5" fill="#8a8a80" stroke="#222" stroke-width="0.7"/><circle cx="1025" cy="483" r="5" fill="#8a8a80" stroke="#222" stroke-width="0.7"/><polygon points="914.0,352.0 976.0,374.0 976.0,460.0 914.0,440.0" fill="#8e8470" stroke="#141414" stroke-width="0.72" stroke-linejoin="round" /><polygon points="715.0,391.0 741.0,399.0 741.0,421.0 715.0,413.0" fill="#9c8262" stroke="#141414" stroke-width="0.84" stroke-linejoin="round" /><polygon points="715.0,391.0 728.0,384.0 778.0,396.0 741.0,399.0" fill="#b49c78" stroke="#141414" stroke-width="0.72" stroke-linejoin="round" /><polygon points="741.0,399.0 778.0,396.0 778.0,408.0 741.0,421.0" fill="#a89070" stroke="#141414" stroke-width="0.72" stroke-linejoin="round" /><polygon points="736.0,380.0 750.0,376.0 752.0,395.0 738.0,398.0" fill="#a8c4a0" stroke="#141414" stroke-width="0.60" stroke-linejoin="round" /><polygon points="817.0,432.0 938.0,472.0 938.0,490.0 817.0,450.0" fill="#9c8260" stroke="#141414" stroke-width="0.84" stroke-linejoin="round" /><polygon points="817.0,432.0 827.0,426.0 948.0,466.0 938.0,472.0" fill="#b8a07a" stroke="#141414" stroke-width="0.60" stroke-linejoin="round" /><polygon points="968.0,482.0 1060.0,512.0 1060.0,530.0 968.0,500.0" fill="#9c8260" stroke="#141414" stroke-width="0.84" stroke-linejoin="round" /><polygon points="968.0,482.0 978.0,476.0 1070.0,506.0 1060.0,512.0" fill="#b8a07a" stroke="#141414" stroke-width="0.60" stroke-linejoin="round" /><polygon points="753.0,309.0 825.0,333.0 825.0,420.0 753.0,398.0" fill="#8b7a60" stroke="#141414" stroke-width="0.96" stroke-linejoin="round" /><polygon points="1060.0,423.0 1128.0,446.0 1128.0,530.0 1060.0,508.0" fill="#8b7a60" stroke="#141414" stroke-width="0.96" stroke-linejoin="round" /><polyline points="914.0,352.0 914.0,464.0" fill="none" stroke="#222" stroke-width="0.8" /><polyline points="976.0,374.0 976.0,486.0" fill="none" stroke="#222" stroke-width="0.8" /><polyline points="705.0,297.0 705.0,432.0 1146.0,584.0 1146.0,446.0" fill="none" stroke="#1a1a1a" stroke-width="1" /><circle cx="712" cy="313" r="2.5" fill="#fff" stroke="#222" stroke-width="0.8"/><circle cx="712" cy="425" r="2.5" fill="#fff" stroke="#222" stroke-width="0.8"/><circle cx="1138" cy="460" r="2.5" fill="#fff" stroke="#222" stroke-width="0.8"/><circle cx="1138" cy="574" r="2.5" fill="#fff" stroke="#222" stroke-width="0.8"/><polyline points="772.0,420.0 772.0,480.0" fill="none" stroke="#222" stroke-width="0.9" /><polyline points="776.0,420.0 776.0,480.0" fill="none" stroke="#222" stroke-width="0.9" /><polyline points="780.0,420.0 780.0,480.0" fill="none" stroke="#222" stroke-width="0.9" /><polyline points="785.0,420.0 785.0,480.0" fill="none" stroke="#222" stroke-width="0.9" /><polyline points="926.0,470.0 926.0,530.0" fill="none" stroke="#222" stroke-width="0.9" /><polyline points="930.0,470.0 930.0,530.0" fill="none" stroke="#222" stroke-width="0.9" /><polyline points="934.0,470.0 934.0,530.0" fill="none" stroke="#222" stroke-width="0.9" /><polyline points="938.0,470.0 938.0,530.0" fill="none" stroke="#222" stroke-width="0.9" /><polyline points="1078.0,520.0 1078.0,580.0" fill="none" stroke="#222" stroke-width="0.9" /><polyline points="1082.0,520.0 1082.0,580.0" fill="none" stroke="#222" stroke-width="0.9" /><polyline points="1086.0,520.0 1086.0,580.0" fill="none" stroke="#222" stroke-width="0.9" /><polyline points="1090.0,520.0 1090.0,580.0" fill="none" stroke="#222" stroke-width="0.9" /><polygon points="707.0,288.6 731.0,278.6 1172.0,426.3 1155.0,438.7" fill="#fbd9a9" stroke="#141414" stroke-width="1.08" stroke-linejoin="round" /><polygon points="707.0,288.6 1155.0,438.7 1155.0,446.0 707.0,296.0" fill="#b29a78" stroke="#141414" stroke-width="0.84" stroke-linejoin="round" /><ellipse cx="737" cy="286" rx="9" ry="2.5" transform="rotate(19 737 286)" fill="#c0a07a" stroke="#222" stroke-width="0.7"/><ellipse cx="753.0" cy="295.5" rx="3.4" ry="1.8" fill="#f0c898" stroke="#333" stroke-width="0.7"/><ellipse cx="762.6" cy="298.7" rx="3.4" ry="1.8" fill="#f0c898" stroke="#333" stroke-width="0.7"/><ellipse cx="772.2" cy="301.9" rx="3.4" ry="1.8" fill="#f0c898" stroke="#333" stroke-width="0.7"/><ellipse cx="781.8" cy="305.1" rx="3.4" ry="1.8" fill="#f0c898" stroke="#333" stroke-width="0.7"/><ellipse cx="791.4" cy="308.4" rx="3.4" ry="1.8" fill="#f0c898" stroke="#333" stroke-width="0.7"/><ellipse cx="801.0" cy="311.6" rx="3.4" ry="1.8" fill="#f0c898" stroke="#333" stroke-width="0.7"/><ellipse cx="810.6" cy="314.8" rx="3.4" ry="1.8" fill="#f0c898" stroke="#333" stroke-width="0.7"/><ellipse cx="820.2" cy="318.0" rx="3.4" ry="1.8" fill="#f0c898" stroke="#333" stroke-width="0.7"/><ellipse cx="829.8" cy="321.2" rx="3.4" ry="1.8" fill="#f0c898" stroke="#333" stroke-width="0.7"/><ellipse cx="839.4" cy="324.4" rx="3.4" ry="1.8" fill="#f0c898" stroke="#333" stroke-width="0.7"/><ellipse cx="903.0" cy="345.7" rx="3.4" ry="1.8" fill="#f0c898" stroke="#333" stroke-width="0.7"/><ellipse cx="912.6" cy="348.9" rx="3.4" ry="1.8" fill="#f0c898" stroke="#333" stroke-width="0.7"/><ellipse cx="922.2" cy="352.1" rx="3.4" ry="1.8" fill="#f0c898" stroke="#333" stroke-width="0.7"/><ellipse cx="931.8" cy="355.3" rx="3.4" ry="1.8" fill="#f0c898" stroke="#333" stroke-width="0.7"/><ellipse cx="941.4" cy="358.6" rx="3.4" ry="1.8" fill="#f0c898" stroke="#333" stroke-width="0.7"/><ellipse cx="951.0" cy="361.8" rx="3.4" ry="1.8" fill="#f0c898" stroke="#333" stroke-width="0.7"/><ellipse cx="960.6" cy="365.0" rx="3.4" ry="1.8" fill="#f0c898" stroke="#333" stroke-width="0.7"/><ellipse cx="970.2" cy="368.2" rx="3.4" ry="1.8" fill="#f0c898" stroke="#333" stroke-width="0.7"/><ellipse cx="979.8" cy="371.4" rx="3.4" ry="1.8" fill="#f0c898" stroke="#333" stroke-width="0.7"/><ellipse cx="989.4" cy="374.6" rx="3.4" ry="1.8" fill="#f0c898" stroke="#333" stroke-width="0.7"/><ellipse cx="999.0" cy="377.9" rx="3.4" ry="1.8" fill="#f0c898" stroke="#333" stroke-width="0.7"/><ellipse cx="1008.6" cy="381.1" rx="3.4" ry="1.8" fill="#f0c898" stroke="#333" stroke-width="0.7"/><ellipse cx="1018.2" cy="384.3" rx="3.4" ry="1.8" fill="#f0c898" stroke="#333" stroke-width="0.7"/><ellipse cx="1024.0" cy="386.5" rx="3.4" ry="1.8" fill="#f0c898" stroke="#333" stroke-width="0.7"/><ellipse cx="1033.6" cy="389.7" rx="3.4" ry="1.8" fill="#f0c898" stroke="#333" stroke-width="0.7"/><ellipse cx="1043.2" cy="392.9" rx="3.4" ry="1.8" fill="#f0c898" stroke="#333" stroke-width="0.7"/><ellipse cx="1052.8" cy="396.1" rx="3.4" ry="1.8" fill="#f0c898" stroke="#333" stroke-width="0.7"/><ellipse cx="1062.4" cy="399.4" rx="3.4" ry="1.8" fill="#f0c898" stroke="#333" stroke-width="0.7"/><ellipse cx="1072.0" cy="402.6" rx="3.4" ry="1.8" fill="#f0c898" stroke="#333" stroke-width="0.7"/><ellipse cx="1081.6" cy="405.8" rx="3.4" ry="1.8" fill="#f0c898" stroke="#333" stroke-width="0.7"/><ellipse cx="1091.2" cy="409.0" rx="3.4" ry="1.8" fill="#f0c898" stroke="#333" stroke-width="0.7"/><ellipse cx="1100.8" cy="412.2" rx="3.4" ry="1.8" fill="#f0c898" stroke="#333" stroke-width="0.7"/><ellipse cx="1110.4" cy="415.4" rx="3.4" ry="1.8" fill="#f0c898" stroke="#333" stroke-width="0.7"/><ellipse cx="1120.0" cy="418.7" rx="3.4" ry="1.8" fill="#f0c898" stroke="#333" stroke-width="0.7"/><ellipse cx="1129.6" cy="421.9" rx="3.4" ry="1.8" fill="#f0c898" stroke="#333" stroke-width="0.7"/><ellipse cx="1150" cy="430" rx="8" ry="2.5" transform="rotate(19 1150 430)" fill="#c0a07a" stroke="#222" stroke-width="0.7"/><circle cx="845" cy="586" r="4" fill="#b4604e" stroke="#333" stroke-width="0.7"/><circle cx="998" cy="639" r="4" fill="#b4604e" stroke="#333" stroke-width="0.7"/><circle cx="1150" cy="691" r="4" fill="#b4604e" stroke="#333" stroke-width="0.7"/><circle cx="1192" cy="688" r="3" fill="none" stroke="#333" stroke-width="0.8"/><circle cx="1313" cy="646" r="3" fill="none" stroke="#333" stroke-width="0.8"/><circle cx="1182" cy="489" r="6" fill="#d0d0d0" stroke="#222" stroke-width="0.9"/><circle cx="1182" cy="489" r="2.5" fill="#f4f4f4"/><circle cx="1273" cy="459" r="6" fill="#d0d0d0" stroke="#222" stroke-width="0.9"/><circle cx="1273" cy="459" r="2.5" fill="#f4f4f4"/><circle cx="1273" cy="828" r="6" fill="#d0d0d0" stroke="#222" stroke-width="0.9"/><circle cx="1273" cy="828" r="2.5" fill="#f4f4f4"/><circle cx="1182" cy="859" r="6" fill="#d0d0d0" stroke="#222" stroke-width="0.9"/><circle cx="1182" cy="859" r="2.5" fill="#f4f4f4"/><polygon points="826.0,784.0 846.0,766.0 846.0,783.0 840.0,790.0" fill="#b8dcb4" stroke="#141414" stroke-width="0.96" stroke-linejoin="round" /><polygon points="1082.0,870.0 1098.0,850.0 1107.0,853.0 1100.0,872.0" fill="#b8dcb4" stroke="#141414" stroke-width="0.96" stroke-linejoin="round" /></svg>
</body></html>
